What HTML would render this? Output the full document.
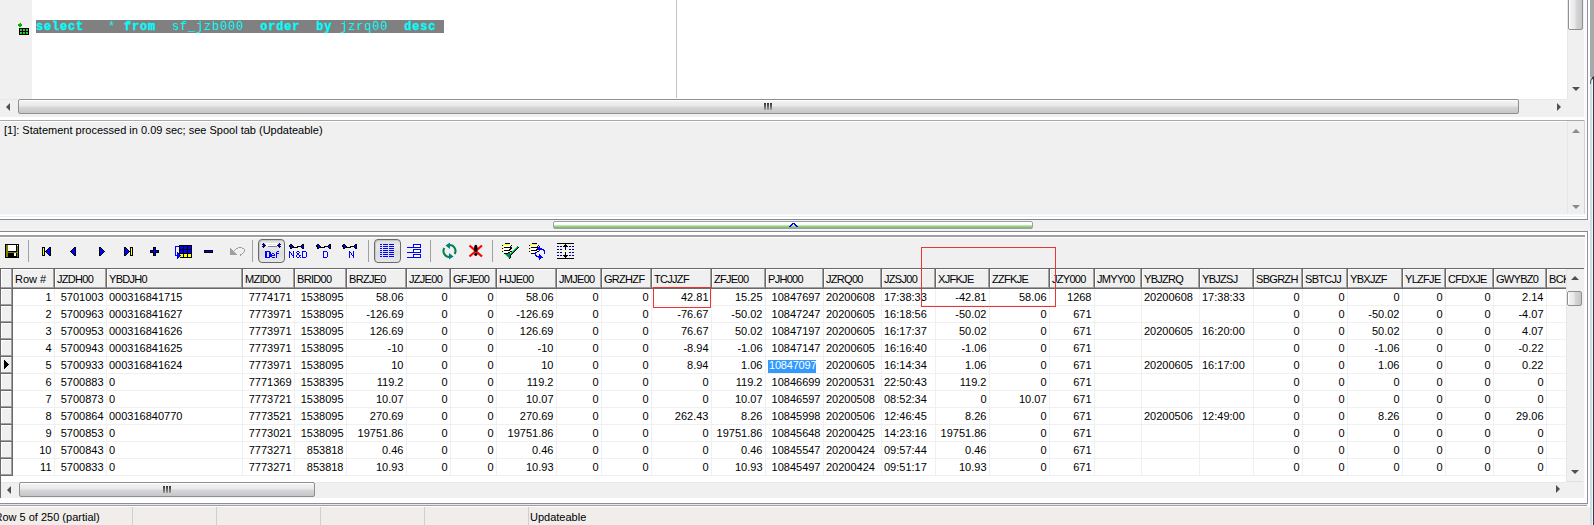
<!DOCTYPE html><html><head><meta charset="utf-8"><style>
*{margin:0;padding:0;box-sizing:border-box}
html,body{width:1594px;height:525px;overflow:hidden;background:#f0f0f0;position:relative}
body div,body svg{position:absolute}
.t{font-family:"Liberation Sans",sans-serif;font-size:11px;line-height:13px;white-space:nowrap;color:#000}
.c{font-family:"Liberation Sans",sans-serif;font-size:11px;line-height:13px;white-space:nowrap;color:#000;overflow:hidden}
.r{text-align:right}
.thumbh{border:1px solid #8e8f8f;border-radius:2px;box-shadow:inset 0 1px 0 #fff;background:linear-gradient(#f4f4f4 0%,#e8e8e8 48%,#d8d8da 52%,#c6c6ca 100%)}
.thumbv{border:1px solid #8e8f8f;border-radius:2px;box-shadow:inset 1px 0 0 #fff;background:linear-gradient(90deg,#f4f4f4 0%,#e8e8e8 48%,#d8d8da 52%,#c6c6ca 100%)}
</style></head><body>

<div style="left:1584px;top:0px;width:10px;height:525px;background:#f0f0f0;"></div>
<div style="left:1584px;top:0px;width:3px;height:525px;background:#fafafa;"></div>
<div style="left:1587px;top:0px;width:1px;height:220px;background:#8c94a4;"></div>
<div style="left:1587px;top:231px;width:1px;height:273px;background:#8c94a4;"></div>
<div style="left:1588px;top:0px;width:2px;height:525px;background:#ffffff;"></div>
<div style="left:1590px;top:0px;width:2px;height:525px;background:#cedcec;"></div>
<div style="left:1592px;top:0px;width:1px;height:525px;background:#eef4fa;"></div>
<div style="left:1593px;top:0px;width:1px;height:525px;background:#3c3c3c;"></div>
<div style="left:1590px;top:0px;width:4px;height:77px;background:#a9a9a9;"></div>
<div style="left:1590px;top:76px;width:8px;height:8px;border-top:2px solid #303030;border-left:1px solid #606060;border-radius:6px 0 0 0"></div>
<div style="left:0px;top:0px;width:1567px;height:99px;background:#ffffff;"></div>
<div style="left:0px;top:0px;width:32px;height:99px;background:#f0f0f0;"></div>
<div style="left:32px;top:0px;width:1px;height:99px;background:#ffffff;"></div>
<div style="left:676px;top:0px;width:1px;height:98px;background:#c4c4c4;"></div>
<svg style="left:18px;top:23px" width="4" height="4" shape-rendering="crispEdges"><rect x="1" y="0" width="1" height="1" fill="#c8e000"/><rect x="2" y="0" width="1" height="1" fill="#00b400"/><rect x="0" y="1" width="4" height="1" fill="#00b400"/><rect x="0" y="2" width="4" height="1" fill="#00b400"/><rect x="1" y="3" width="2" height="1" fill="#00b400"/></svg>
<svg style="left:19px;top:28px" width="10" height="7" shape-rendering="crispEdges"><rect x="0" y="0" width="10" height="7" fill="#000"/><rect x="1" y="1" width="2" height="2" fill="#30c030"/><rect x="1" y="1" width="1" height="1" fill="#00ff00"/><rect x="1" y="4" width="2" height="2" fill="#30c030"/><rect x="1" y="4" width="1" height="1" fill="#00ff00"/><rect x="4" y="1" width="2" height="2" fill="#30c030"/><rect x="4" y="1" width="1" height="1" fill="#00ff00"/><rect x="4" y="4" width="2" height="2" fill="#30c030"/><rect x="4" y="4" width="1" height="1" fill="#00ff00"/><rect x="7" y="1" width="2" height="2" fill="#30c030"/><rect x="7" y="1" width="1" height="1" fill="#00ff00"/><rect x="7" y="4" width="2" height="2" fill="#30c030"/><rect x="7" y="4" width="1" height="1" fill="#00ff00"/></svg>
<div style="left:36px;top:20px;width:408px;height:13px;background:#808080;"></div>
<div style="left:36px;top:21px;font-family:'Liberation Mono',monospace;font-weight:bold;font-size:12px;letter-spacing:0.8px;line-height:13px;color:#00ffff;-webkit-text-stroke:0.3px #00ffff;white-space:pre"><b>select</b>   <span style="font-weight:normal;-webkit-text-stroke:0">*</span> <b>from</b>  <span style="font-weight:normal;-webkit-text-stroke:0">sf_jzb000</span>  <b>order</b>  <b>by</b> <span style="font-weight:normal;-webkit-text-stroke:0">jzrq00</span>  <b>desc</b> </div>
<div style="left:1567px;top:0px;width:17px;height:99px;background:#f0f0f0;"></div>
<div style="left:1567px;top:0px;width:1px;height:99px;background:#e6e6e6;"></div>
<div class="thumbv" style="left:1568px;top:-2px;width:15px;height:32px"></div>
<svg style="left:1572px;top:87px" width="9" height="5"><polygon points="0,0 8,0 4,4" fill="#505050"/></svg>
<div style="left:0px;top:99px;width:1567px;height:16px;background:#f0f0f0;"></div>
<div style="left:0px;top:99px;width:1567px;height:1px;background:#e8e8e8;"></div>
<svg style="left:6px;top:103px" width="5" height="9"><polygon points="4,0 4,8 0,4" fill="#505050"/></svg>
<div class="thumbh" style="left:18px;top:99px;width:1501px;height:15px"></div>
<svg style="left:764px;top:103px" width="8" height="7" shape-rendering="crispEdges"><rect x="0" y="0" width="2" height="7" fill="url(#gg)"/><rect x="3" y="0" width="2" height="7" fill="url(#gg)"/><rect x="6" y="0" width="2" height="7" fill="url(#gg)"/></svg>
<svg style="left:1557px;top:103px" width="5" height="9"><polygon points="0,0 4,4 0,8" fill="#505050"/></svg>
<div style="left:1567px;top:99px;width:17px;height:16px;background:#f0f0f0;"></div>
<div style="left:0px;top:117px;width:1585px;height:3px;background:#ffffff;"></div>
<div style="left:0px;top:120px;width:1585px;height:1px;background:#a8a8a8;"></div>
<div style="left:0px;top:121px;width:1585px;height:1px;background:#ffffff;"></div>
<div style="left:1584px;top:120px;width:1px;height:95px;background:#d4d4d4;"></div>
<div style="left:0px;top:122px;width:1584px;height:93px;background:#f0f0f0;"></div>
<div class="t" style="left:4px;top:124px;">[1]: Statement processed in 0.09 sec; see Spool tab (Updateable)</div>
<div style="left:1567px;top:121px;width:17px;height:94px;background:#f0f0f0;"></div>
<div style="left:1567px;top:121px;width:1px;height:94px;background:#e6e6e6;"></div>
<svg style="left:1572px;top:129px" width="9" height="5"><polygon points="0,4 8,4 4,0" fill="#8a8a8a"/></svg>
<svg style="left:1572px;top:205px" width="9" height="5"><polygon points="0,0 8,0 4,4" fill="#8a8a8a"/></svg>
<div style="left:1567px;top:214px;width:17px;height:1px;background:#e0e0e0;"></div>
<div style="left:0px;top:214px;width:1587px;height:1px;background:#f8f8f8;"></div>
<div style="left:0px;top:215px;width:1587px;height:1px;background:#ffffff;"></div>
<div style="left:0px;top:216px;width:1585px;height:1px;background:#e6ecf4;"></div>
<div style="left:0px;top:217px;width:1587px;height:2px;background:#ffffff;"></div>
<div style="left:0px;top:219px;width:1588px;height:1px;background:#84888f;"></div>
<div style="left:0px;top:220px;width:1590px;height:1px;background:#f0f0f0;"></div>
<div style="left:0px;top:221px;width:1590px;height:10px;background:#f0f0f0;"></div>
<div style="left:553px;top:221px;width:480px;height:8px;border:1px solid #a0a0a0;border-radius:2px;background:linear-gradient(#ffffff 0%,#ffffff 50%,#c8f4b8 50%,#9cd088 75%,#7cae6c 100%)"></div>
<svg style="left:789px;top:223px" width="9" height="4" shape-rendering="crispEdges"><rect x="3" y="0" width="3" height="1" fill="#0000ff"/><rect x="2" y="1" width="2" height="1" fill="#0000ff"/><rect x="5" y="1" width="2" height="1" fill="#0000ff"/><rect x="1" y="2" width="2" height="1" fill="#0000ff"/><rect x="6" y="2" width="2" height="1" fill="#0000ff"/><rect x="0" y="3" width="2" height="1" fill="#0000ff"/><rect x="7" y="3" width="2" height="1" fill="#0000ff"/></svg>
<div style="left:0px;top:229px;width:1584px;height:1px;background:#f4f4f4;"></div>
<div style="left:0px;top:231px;width:1588px;height:1px;background:#84888f;"></div>
<div style="left:0px;top:232px;width:1587px;height:3px;background:#ffffff;"></div>
<div style="left:0px;top:235px;width:1585px;height:2px;background:#a0a0a0;"></div>
<div style="left:1585px;top:232px;width:2px;height:272px;background:#ffffff;"></div>
<div style="left:0px;top:237px;width:1585px;height:31px;background:#f0f0f0;"></div>
<div style="left:0px;top:237px;width:1585px;height:1px;background:#ffffff;"></div>
<svg style="left:5px;top:244px" width="14" height="14" shape-rendering="crispEdges"><rect x="0" y="0" width="14" height="1" fill="#000000"/><rect x="0" y="1" width="1" height="1" fill="#000000"/><rect x="1" y="1" width="2" height="1" fill="#808000"/><rect x="3" y="1" width="8" height="1" fill="#ffffff"/><rect x="11" y="1" width="1" height="1" fill="#000000"/><rect x="12" y="1" width="1" height="1" fill="#ffffff"/><rect x="13" y="1" width="1" height="1" fill="#000000"/><rect x="0" y="2" width="1" height="1" fill="#000000"/><rect x="1" y="2" width="2" height="1" fill="#808000"/><rect x="3" y="2" width="8" height="1" fill="#ffffff"/><rect x="11" y="2" width="1" height="1" fill="#000000"/><rect x="12" y="2" width="1" height="1" fill="#808000"/><rect x="13" y="2" width="1" height="1" fill="#000000"/><rect x="0" y="3" width="1" height="1" fill="#000000"/><rect x="1" y="3" width="2" height="1" fill="#808000"/><rect x="3" y="3" width="8" height="1" fill="#ffffff"/><rect x="11" y="3" width="1" height="1" fill="#000000"/><rect x="12" y="3" width="1" height="1" fill="#808000"/><rect x="13" y="3" width="1" height="1" fill="#000000"/><rect x="0" y="4" width="1" height="1" fill="#000000"/><rect x="1" y="4" width="2" height="1" fill="#808000"/><rect x="3" y="4" width="8" height="1" fill="#ffffff"/><rect x="11" y="4" width="1" height="1" fill="#000000"/><rect x="12" y="4" width="1" height="1" fill="#808000"/><rect x="13" y="4" width="1" height="1" fill="#000000"/><rect x="0" y="5" width="1" height="1" fill="#000000"/><rect x="1" y="5" width="2" height="1" fill="#808000"/><rect x="3" y="5" width="8" height="1" fill="#ffffff"/><rect x="11" y="5" width="1" height="1" fill="#000000"/><rect x="12" y="5" width="1" height="1" fill="#808000"/><rect x="13" y="5" width="1" height="1" fill="#000000"/><rect x="0" y="6" width="1" height="1" fill="#000000"/><rect x="1" y="6" width="2" height="1" fill="#808000"/><rect x="3" y="6" width="8" height="1" fill="#ffffff"/><rect x="11" y="6" width="1" height="1" fill="#000000"/><rect x="12" y="6" width="1" height="1" fill="#808000"/><rect x="13" y="6" width="1" height="1" fill="#000000"/><rect x="0" y="7" width="1" height="1" fill="#000000"/><rect x="1" y="7" width="2" height="1" fill="#808000"/><rect x="3" y="7" width="9" height="1" fill="#000000"/><rect x="12" y="7" width="1" height="1" fill="#808000"/><rect x="13" y="7" width="1" height="1" fill="#000000"/><rect x="0" y="8" width="1" height="1" fill="#000000"/><rect x="1" y="8" width="12" height="1" fill="#808000"/><rect x="13" y="8" width="1" height="1" fill="#000000"/><rect x="0" y="9" width="1" height="1" fill="#000000"/><rect x="1" y="9" width="2" height="1" fill="#808000"/><rect x="3" y="9" width="6" height="1" fill="#000000"/><rect x="9" y="9" width="2" height="1" fill="#ffffff"/><rect x="11" y="9" width="1" height="1" fill="#000000"/><rect x="12" y="9" width="1" height="1" fill="#808000"/><rect x="13" y="9" width="1" height="1" fill="#000000"/><rect x="0" y="10" width="1" height="1" fill="#000000"/><rect x="1" y="10" width="2" height="1" fill="#808000"/><rect x="3" y="10" width="6" height="1" fill="#000000"/><rect x="9" y="10" width="2" height="1" fill="#ffffff"/><rect x="11" y="10" width="1" height="1" fill="#000000"/><rect x="12" y="10" width="1" height="1" fill="#808000"/><rect x="13" y="10" width="1" height="1" fill="#000000"/><rect x="0" y="11" width="1" height="1" fill="#000000"/><rect x="1" y="11" width="2" height="1" fill="#808000"/><rect x="3" y="11" width="6" height="1" fill="#000000"/><rect x="9" y="11" width="2" height="1" fill="#ffffff"/><rect x="11" y="11" width="1" height="1" fill="#000000"/><rect x="12" y="11" width="1" height="1" fill="#808000"/><rect x="13" y="11" width="1" height="1" fill="#000000"/><rect x="0" y="12" width="1" height="1" fill="#000000"/><rect x="1" y="12" width="2" height="1" fill="#808000"/><rect x="3" y="12" width="9" height="1" fill="#000000"/><rect x="12" y="12" width="1" height="1" fill="#808000"/><rect x="13" y="12" width="1" height="1" fill="#000000"/><rect x="0" y="13" width="14" height="1" fill="#000000"/></svg>
<div style="left:28px;top:240px;width:1px;height:22px;background:#a0a0a0;"></div>
<svg style="left:42px;top:247px" width="9" height="9" shape-rendering="crispEdges"><rect x="0" y="0" width="3" height="1" fill="#000000"/><rect x="7" y="0" width="2" height="1" fill="#000000"/><rect x="0" y="1" width="1" height="1" fill="#000000"/><rect x="1" y="1" width="1" height="1" fill="#ffff00"/><rect x="2" y="1" width="1" height="1" fill="#000000"/><rect x="6" y="1" width="1" height="1" fill="#000000"/><rect x="7" y="1" width="1" height="1" fill="#0000ff"/><rect x="8" y="1" width="1" height="1" fill="#000000"/><rect x="0" y="2" width="1" height="1" fill="#000000"/><rect x="1" y="2" width="1" height="1" fill="#ffff00"/><rect x="2" y="2" width="1" height="1" fill="#000000"/><rect x="5" y="2" width="1" height="1" fill="#000000"/><rect x="6" y="2" width="2" height="1" fill="#0000ff"/><rect x="8" y="2" width="1" height="1" fill="#000000"/><rect x="0" y="3" width="1" height="1" fill="#000000"/><rect x="1" y="3" width="1" height="1" fill="#ffff00"/><rect x="2" y="3" width="1" height="1" fill="#000000"/><rect x="4" y="3" width="1" height="1" fill="#000000"/><rect x="5" y="3" width="3" height="1" fill="#0000ff"/><rect x="8" y="3" width="1" height="1" fill="#000000"/><rect x="0" y="4" width="1" height="1" fill="#000000"/><rect x="1" y="4" width="1" height="1" fill="#ffff00"/><rect x="2" y="4" width="2" height="1" fill="#000000"/><rect x="4" y="4" width="4" height="1" fill="#0000ff"/><rect x="8" y="4" width="1" height="1" fill="#000000"/><rect x="0" y="5" width="1" height="1" fill="#000000"/><rect x="1" y="5" width="1" height="1" fill="#ffff00"/><rect x="2" y="5" width="1" height="1" fill="#000000"/><rect x="4" y="5" width="1" height="1" fill="#000000"/><rect x="5" y="5" width="3" height="1" fill="#0000ff"/><rect x="8" y="5" width="1" height="1" fill="#000000"/><rect x="0" y="6" width="1" height="1" fill="#000000"/><rect x="1" y="6" width="1" height="1" fill="#ffff00"/><rect x="2" y="6" width="1" height="1" fill="#000000"/><rect x="5" y="6" width="1" height="1" fill="#000000"/><rect x="6" y="6" width="2" height="1" fill="#0000ff"/><rect x="8" y="6" width="1" height="1" fill="#000000"/><rect x="0" y="7" width="1" height="1" fill="#000000"/><rect x="1" y="7" width="1" height="1" fill="#ffff00"/><rect x="2" y="7" width="1" height="1" fill="#000000"/><rect x="6" y="7" width="1" height="1" fill="#000000"/><rect x="7" y="7" width="1" height="1" fill="#0000ff"/><rect x="8" y="7" width="1" height="1" fill="#000000"/><rect x="0" y="8" width="3" height="1" fill="#000000"/><rect x="7" y="8" width="2" height="1" fill="#000000"/></svg>
<svg style="left:70px;top:247px" width="6" height="9" shape-rendering="crispEdges"><rect x="4" y="0" width="2" height="1" fill="#000000"/><rect x="3" y="1" width="1" height="1" fill="#000000"/><rect x="4" y="1" width="1" height="1" fill="#0000ff"/><rect x="5" y="1" width="1" height="1" fill="#000000"/><rect x="2" y="2" width="1" height="1" fill="#000000"/><rect x="3" y="2" width="2" height="1" fill="#0000ff"/><rect x="5" y="2" width="1" height="1" fill="#000000"/><rect x="1" y="3" width="1" height="1" fill="#000000"/><rect x="2" y="3" width="3" height="1" fill="#0000ff"/><rect x="5" y="3" width="1" height="1" fill="#000000"/><rect x="0" y="4" width="1" height="1" fill="#000000"/><rect x="1" y="4" width="4" height="1" fill="#0000ff"/><rect x="5" y="4" width="1" height="1" fill="#000000"/><rect x="1" y="5" width="1" height="1" fill="#000000"/><rect x="2" y="5" width="3" height="1" fill="#0000ff"/><rect x="5" y="5" width="1" height="1" fill="#000000"/><rect x="2" y="6" width="1" height="1" fill="#000000"/><rect x="3" y="6" width="2" height="1" fill="#0000ff"/><rect x="5" y="6" width="1" height="1" fill="#000000"/><rect x="3" y="7" width="1" height="1" fill="#000000"/><rect x="4" y="7" width="1" height="1" fill="#0000ff"/><rect x="5" y="7" width="1" height="1" fill="#000000"/><rect x="4" y="8" width="2" height="1" fill="#000000"/></svg>
<svg style="left:99px;top:247px" width="6" height="9" shape-rendering="crispEdges"><rect x="0" y="0" width="2" height="1" fill="#000000"/><rect x="0" y="1" width="1" height="1" fill="#000000"/><rect x="1" y="1" width="1" height="1" fill="#0000ff"/><rect x="2" y="1" width="1" height="1" fill="#000000"/><rect x="0" y="2" width="1" height="1" fill="#000000"/><rect x="1" y="2" width="2" height="1" fill="#0000ff"/><rect x="3" y="2" width="1" height="1" fill="#000000"/><rect x="0" y="3" width="1" height="1" fill="#000000"/><rect x="1" y="3" width="3" height="1" fill="#0000ff"/><rect x="4" y="3" width="1" height="1" fill="#000000"/><rect x="0" y="4" width="1" height="1" fill="#000000"/><rect x="1" y="4" width="4" height="1" fill="#0000ff"/><rect x="5" y="4" width="1" height="1" fill="#000000"/><rect x="0" y="5" width="1" height="1" fill="#000000"/><rect x="1" y="5" width="3" height="1" fill="#0000ff"/><rect x="4" y="5" width="1" height="1" fill="#000000"/><rect x="0" y="6" width="1" height="1" fill="#000000"/><rect x="1" y="6" width="2" height="1" fill="#0000ff"/><rect x="3" y="6" width="1" height="1" fill="#000000"/><rect x="0" y="7" width="1" height="1" fill="#000000"/><rect x="1" y="7" width="1" height="1" fill="#0000ff"/><rect x="2" y="7" width="1" height="1" fill="#000000"/><rect x="0" y="8" width="2" height="1" fill="#000000"/></svg>
<svg style="left:124px;top:247px" width="9" height="9" shape-rendering="crispEdges"><rect x="0" y="0" width="2" height="1" fill="#000000"/><rect x="6" y="0" width="3" height="1" fill="#000000"/><rect x="0" y="1" width="1" height="1" fill="#000000"/><rect x="1" y="1" width="1" height="1" fill="#0000ff"/><rect x="2" y="1" width="1" height="1" fill="#000000"/><rect x="6" y="1" width="1" height="1" fill="#000000"/><rect x="7" y="1" width="1" height="1" fill="#ffff00"/><rect x="8" y="1" width="1" height="1" fill="#000000"/><rect x="0" y="2" width="1" height="1" fill="#000000"/><rect x="1" y="2" width="2" height="1" fill="#0000ff"/><rect x="3" y="2" width="1" height="1" fill="#000000"/><rect x="6" y="2" width="1" height="1" fill="#000000"/><rect x="7" y="2" width="1" height="1" fill="#ffff00"/><rect x="8" y="2" width="1" height="1" fill="#000000"/><rect x="0" y="3" width="1" height="1" fill="#000000"/><rect x="1" y="3" width="3" height="1" fill="#0000ff"/><rect x="4" y="3" width="1" height="1" fill="#000000"/><rect x="6" y="3" width="1" height="1" fill="#000000"/><rect x="7" y="3" width="1" height="1" fill="#ffff00"/><rect x="8" y="3" width="1" height="1" fill="#000000"/><rect x="0" y="4" width="1" height="1" fill="#000000"/><rect x="1" y="4" width="4" height="1" fill="#0000ff"/><rect x="5" y="4" width="2" height="1" fill="#000000"/><rect x="7" y="4" width="1" height="1" fill="#ffff00"/><rect x="8" y="4" width="1" height="1" fill="#000000"/><rect x="0" y="5" width="1" height="1" fill="#000000"/><rect x="1" y="5" width="3" height="1" fill="#0000ff"/><rect x="4" y="5" width="1" height="1" fill="#000000"/><rect x="6" y="5" width="1" height="1" fill="#000000"/><rect x="7" y="5" width="1" height="1" fill="#ffff00"/><rect x="8" y="5" width="1" height="1" fill="#000000"/><rect x="0" y="6" width="1" height="1" fill="#000000"/><rect x="1" y="6" width="2" height="1" fill="#0000ff"/><rect x="3" y="6" width="1" height="1" fill="#000000"/><rect x="6" y="6" width="1" height="1" fill="#000000"/><rect x="7" y="6" width="1" height="1" fill="#ffff00"/><rect x="8" y="6" width="1" height="1" fill="#000000"/><rect x="0" y="7" width="1" height="1" fill="#000000"/><rect x="1" y="7" width="1" height="1" fill="#0000ff"/><rect x="2" y="7" width="1" height="1" fill="#000000"/><rect x="6" y="7" width="1" height="1" fill="#000000"/><rect x="7" y="7" width="1" height="1" fill="#ffff00"/><rect x="8" y="7" width="1" height="1" fill="#000000"/><rect x="0" y="8" width="2" height="1" fill="#000000"/><rect x="6" y="8" width="3" height="1" fill="#000000"/></svg>
<svg style="left:150px;top:247px" width="9" height="9" shape-rendering="crispEdges"><rect x="3" y="0" width="3" height="1" fill="#000000"/><rect x="3" y="1" width="1" height="1" fill="#000000"/><rect x="4" y="1" width="1" height="1" fill="#0000ff"/><rect x="5" y="1" width="1" height="1" fill="#000000"/><rect x="3" y="2" width="1" height="1" fill="#000000"/><rect x="4" y="2" width="1" height="1" fill="#0000ff"/><rect x="5" y="2" width="1" height="1" fill="#000000"/><rect x="0" y="3" width="4" height="1" fill="#000000"/><rect x="4" y="3" width="1" height="1" fill="#0000ff"/><rect x="5" y="3" width="4" height="1" fill="#000000"/><rect x="0" y="4" width="1" height="1" fill="#000000"/><rect x="1" y="4" width="7" height="1" fill="#0000ff"/><rect x="8" y="4" width="1" height="1" fill="#000000"/><rect x="0" y="5" width="4" height="1" fill="#000000"/><rect x="4" y="5" width="1" height="1" fill="#0000ff"/><rect x="5" y="5" width="4" height="1" fill="#000000"/><rect x="3" y="6" width="1" height="1" fill="#000000"/><rect x="4" y="6" width="1" height="1" fill="#0000ff"/><rect x="5" y="6" width="1" height="1" fill="#000000"/><rect x="3" y="7" width="1" height="1" fill="#000000"/><rect x="4" y="7" width="1" height="1" fill="#0000ff"/><rect x="5" y="7" width="1" height="1" fill="#000000"/><rect x="3" y="8" width="3" height="1" fill="#000000"/></svg>
<svg style="left:175px;top:245px" width="17" height="14" shape-rendering="crispEdges"><rect x="4" y="0" width="13" height="1" fill="#000000"/><rect x="0" y="1" width="4" height="1" fill="#0000ff"/><rect x="4" y="1" width="1" height="1" fill="#000000"/><rect x="5" y="1" width="3" height="1" fill="#0000ff"/><rect x="8" y="1" width="1" height="1" fill="#000000"/><rect x="9" y="1" width="3" height="1" fill="#0000ff"/><rect x="12" y="1" width="1" height="1" fill="#000000"/><rect x="13" y="1" width="3" height="1" fill="#0000ff"/><rect x="16" y="1" width="1" height="1" fill="#000000"/><rect x="0" y="2" width="1" height="1" fill="#0000ff"/><rect x="4" y="2" width="1" height="1" fill="#000000"/><rect x="5" y="2" width="3" height="1" fill="#0000ff"/><rect x="8" y="2" width="1" height="1" fill="#000000"/><rect x="9" y="2" width="3" height="1" fill="#0000ff"/><rect x="12" y="2" width="1" height="1" fill="#000000"/><rect x="13" y="2" width="3" height="1" fill="#0000ff"/><rect x="16" y="2" width="1" height="1" fill="#000000"/><rect x="0" y="3" width="1" height="1" fill="#0000ff"/><rect x="4" y="3" width="1" height="1" fill="#000000"/><rect x="5" y="3" width="3" height="1" fill="#0000ff"/><rect x="8" y="3" width="1" height="1" fill="#000000"/><rect x="9" y="3" width="3" height="1" fill="#0000ff"/><rect x="12" y="3" width="1" height="1" fill="#000000"/><rect x="13" y="3" width="3" height="1" fill="#0000ff"/><rect x="16" y="3" width="1" height="1" fill="#000000"/><rect x="0" y="4" width="1" height="1" fill="#0000ff"/><rect x="4" y="4" width="13" height="1" fill="#000000"/><rect x="0" y="5" width="1" height="1" fill="#0000ff"/><rect x="4" y="5" width="1" height="1" fill="#000000"/><rect x="5" y="5" width="3" height="1" fill="#0000ff"/><rect x="8" y="5" width="1" height="1" fill="#000000"/><rect x="9" y="5" width="3" height="1" fill="#0000ff"/><rect x="12" y="5" width="1" height="1" fill="#000000"/><rect x="13" y="5" width="3" height="1" fill="#0000ff"/><rect x="16" y="5" width="1" height="1" fill="#000000"/><rect x="0" y="6" width="1" height="1" fill="#0000ff"/><rect x="4" y="6" width="1" height="1" fill="#000000"/><rect x="5" y="6" width="3" height="1" fill="#0000ff"/><rect x="8" y="6" width="1" height="1" fill="#000000"/><rect x="9" y="6" width="3" height="1" fill="#0000ff"/><rect x="12" y="6" width="1" height="1" fill="#000000"/><rect x="13" y="6" width="3" height="1" fill="#0000ff"/><rect x="16" y="6" width="1" height="1" fill="#000000"/><rect x="0" y="7" width="1" height="1" fill="#0000ff"/><rect x="2" y="7" width="1" height="1" fill="#0000ff"/><rect x="4" y="7" width="1" height="1" fill="#000000"/><rect x="5" y="7" width="3" height="1" fill="#0000ff"/><rect x="8" y="7" width="1" height="1" fill="#000000"/><rect x="9" y="7" width="3" height="1" fill="#0000ff"/><rect x="12" y="7" width="1" height="1" fill="#000000"/><rect x="13" y="7" width="3" height="1" fill="#0000ff"/><rect x="16" y="7" width="1" height="1" fill="#000000"/><rect x="0" y="8" width="1" height="1" fill="#0000ff"/><rect x="2" y="8" width="2" height="1" fill="#0000ff"/><rect x="4" y="8" width="13" height="1" fill="#000000"/><rect x="0" y="9" width="1" height="1" fill="#0000ff"/><rect x="2" y="9" width="3" height="1" fill="#0000ff"/><rect x="5" y="9" width="3" height="1" fill="#ffff00"/><rect x="8" y="9" width="1" height="1" fill="#000000"/><rect x="9" y="9" width="3" height="1" fill="#ffff00"/><rect x="12" y="9" width="1" height="1" fill="#000000"/><rect x="13" y="9" width="3" height="1" fill="#ffff00"/><rect x="16" y="9" width="1" height="1" fill="#000000"/><rect x="0" y="10" width="6" height="1" fill="#0000ff"/><rect x="6" y="10" width="2" height="1" fill="#ffff00"/><rect x="8" y="10" width="1" height="1" fill="#000000"/><rect x="9" y="10" width="3" height="1" fill="#ffff00"/><rect x="12" y="10" width="1" height="1" fill="#000000"/><rect x="13" y="10" width="3" height="1" fill="#ffff00"/><rect x="16" y="10" width="1" height="1" fill="#000000"/><rect x="2" y="11" width="3" height="1" fill="#0000ff"/><rect x="5" y="11" width="3" height="1" fill="#ffff00"/><rect x="8" y="11" width="1" height="1" fill="#000000"/><rect x="9" y="11" width="3" height="1" fill="#ffff00"/><rect x="12" y="11" width="1" height="1" fill="#000000"/><rect x="13" y="11" width="3" height="1" fill="#ffff00"/><rect x="16" y="11" width="1" height="1" fill="#000000"/><rect x="2" y="12" width="2" height="1" fill="#0000ff"/><rect x="5" y="12" width="12" height="1" fill="#000000"/><rect x="2" y="13" width="1" height="1" fill="#0000ff"/></svg>
<svg style="left:204px;top:250px" width="9" height="3" shape-rendering="crispEdges"><rect x="0" y="0" width="9" height="1" fill="#000000"/><rect x="0" y="1" width="1" height="1" fill="#000000"/><rect x="1" y="1" width="7" height="1" fill="#0000ff"/><rect x="8" y="1" width="1" height="1" fill="#000000"/><rect x="0" y="2" width="9" height="1" fill="#000000"/></svg>
<svg style="left:230px;top:247px" width="15" height="9" shape-rendering="crispEdges"><rect x="8" y="0" width="4" height="1" fill="#a0a0a0"/><rect x="0" y="1" width="1" height="1" fill="#a0a0a0"/><rect x="6" y="1" width="2" height="1" fill="#a0a0a0"/><rect x="12" y="1" width="2" height="1" fill="#a0a0a0"/><rect x="0" y="2" width="2" height="1" fill="#a0a0a0"/><rect x="5" y="2" width="1" height="1" fill="#a0a0a0"/><rect x="14" y="2" width="1" height="1" fill="#a0a0a0"/><rect x="0" y="3" width="3" height="1" fill="#a0a0a0"/><rect x="4" y="3" width="1" height="1" fill="#a0a0a0"/><rect x="14" y="3" width="1" height="1" fill="#a0a0a0"/><rect x="0" y="4" width="4" height="1" fill="#a0a0a0"/><rect x="14" y="4" width="1" height="1" fill="#a0a0a0"/><rect x="0" y="5" width="5" height="1" fill="#a0a0a0"/><rect x="13" y="5" width="1" height="1" fill="#a0a0a0"/><rect x="0" y="6" width="6" height="1" fill="#a0a0a0"/><rect x="12" y="6" width="1" height="1" fill="#a0a0a0"/><rect x="0" y="7" width="7" height="1" fill="#a0a0a0"/><rect x="10" y="7" width="2" height="1" fill="#a0a0a0"/><rect x="10" y="8" width="1" height="1" fill="#a0a0a0"/></svg>
<div style="left:252px;top:240px;width:1px;height:22px;background:#a0a0a0;"></div>
<div style="left:258px;top:239px;width:27px;height:24px;border:1px solid #6a6a6a;border-radius:4px;box-shadow:inset 1px 1px 0 #c8c8c8;background:linear-gradient(#dcdcdc 0%,#e8e8e8 25%,#e4e4e4 50%,#dcdcdc 52%,#e6e6e6 100%)"></div>
<div style="left:374px;top:239px;width:27px;height:24px;border:1px solid #6a6a6a;border-radius:4px;box-shadow:inset 1px 1px 0 #c8c8c8;background:linear-gradient(#dcdcdc 0%,#e8e8e8 25%,#e4e4e4 50%,#dcdcdc 52%,#e6e6e6 100%)"></div>
<svg style="left:262px;top:243px" width="20" height="5" shape-rendering="crispEdges"><rect x="1" y="0" width="1" height="1" fill="#000080"/><rect x="4" y="0" width="11" height="1" fill="#ffffff"/><rect x="17" y="0" width="1" height="1" fill="#000080"/><rect x="0" y="1" width="3" height="1" fill="#000080"/><rect x="4" y="1" width="1" height="1" fill="#ffffff"/><rect x="14" y="1" width="1" height="1" fill="#ffffff"/><rect x="16" y="1" width="3" height="1" fill="#000080"/><rect x="1" y="2" width="3" height="1" fill="#000080"/><rect x="4" y="2" width="11" height="1" fill="#ffffff"/><rect x="15" y="2" width="3" height="1" fill="#000080"/><rect x="0" y="3" width="3" height="1" fill="#000080"/><rect x="6" y="3" width="9" height="1" fill="#808080"/><rect x="16" y="3" width="3" height="1" fill="#000080"/><rect x="1" y="4" width="1" height="1" fill="#000080"/><rect x="17" y="4" width="1" height="1" fill="#000080"/></svg>
<svg style="left:265px;top:251px" width="14" height="7" shape-rendering="crispEdges"><rect x="0" y="0" width="5" height="1" fill="#0000ff"/><rect x="12" y="0" width="2" height="1" fill="#0000ff"/><rect x="0" y="1" width="2" height="1" fill="#0000ff"/><rect x="4" y="1" width="2" height="1" fill="#0000ff"/><rect x="11" y="1" width="1" height="1" fill="#0000ff"/><rect x="0" y="2" width="2" height="1" fill="#0000ff"/><rect x="4" y="2" width="2" height="1" fill="#0000ff"/><rect x="7" y="2" width="2" height="1" fill="#0000ff"/><rect x="11" y="2" width="3" height="1" fill="#0000ff"/><rect x="0" y="3" width="2" height="1" fill="#0000ff"/><rect x="4" y="3" width="3" height="1" fill="#0000ff"/><rect x="9" y="3" width="1" height="1" fill="#0000ff"/><rect x="11" y="3" width="1" height="1" fill="#0000ff"/><rect x="0" y="4" width="2" height="1" fill="#0000ff"/><rect x="4" y="4" width="6" height="1" fill="#0000ff"/><rect x="11" y="4" width="1" height="1" fill="#0000ff"/><rect x="0" y="5" width="2" height="1" fill="#0000ff"/><rect x="4" y="5" width="3" height="1" fill="#0000ff"/><rect x="11" y="5" width="1" height="1" fill="#0000ff"/><rect x="0" y="6" width="5" height="1" fill="#0000ff"/><rect x="7" y="6" width="3" height="1" fill="#0000ff"/><rect x="11" y="6" width="1" height="1" fill="#0000ff"/></svg>
<svg style="left:289px;top:244px" width="15" height="5" shape-rendering="crispEdges"><rect x="1" y="0" width="2" height="1" fill="#000000"/><rect x="13" y="0" width="2" height="1" fill="#000000"/><rect x="0" y="1" width="1" height="1" fill="#000000"/><rect x="1" y="1" width="2" height="1" fill="#0000ff"/><rect x="3" y="1" width="1" height="1" fill="#000000"/><rect x="12" y="1" width="1" height="1" fill="#000000"/><rect x="13" y="1" width="1" height="1" fill="#0000ff"/><rect x="14" y="1" width="1" height="1" fill="#000000"/><rect x="0" y="2" width="2" height="1" fill="#000000"/><rect x="2" y="2" width="2" height="1" fill="#0000ff"/><rect x="4" y="2" width="1" height="1" fill="#000000"/><rect x="8" y="2" width="4" height="1" fill="#000000"/><rect x="12" y="2" width="2" height="1" fill="#0000ff"/><rect x="14" y="2" width="1" height="1" fill="#000000"/><rect x="1" y="3" width="1" height="1" fill="#000000"/><rect x="2" y="3" width="1" height="1" fill="#0000ff"/><rect x="3" y="3" width="6" height="1" fill="#000000"/><rect x="12" y="3" width="1" height="1" fill="#000000"/><rect x="13" y="3" width="1" height="1" fill="#0000ff"/><rect x="14" y="3" width="1" height="1" fill="#000000"/><rect x="1" y="4" width="2" height="1" fill="#000000"/><rect x="13" y="4" width="2" height="1" fill="#000000"/></svg>
<svg style="left:316px;top:244px" width="15" height="5" shape-rendering="crispEdges"><rect x="1" y="0" width="2" height="1" fill="#000000"/><rect x="13" y="0" width="2" height="1" fill="#000000"/><rect x="0" y="1" width="1" height="1" fill="#000000"/><rect x="1" y="1" width="2" height="1" fill="#0000ff"/><rect x="3" y="1" width="1" height="1" fill="#000000"/><rect x="12" y="1" width="1" height="1" fill="#000000"/><rect x="13" y="1" width="1" height="1" fill="#0000ff"/><rect x="14" y="1" width="1" height="1" fill="#000000"/><rect x="0" y="2" width="2" height="1" fill="#000000"/><rect x="2" y="2" width="2" height="1" fill="#0000ff"/><rect x="4" y="2" width="1" height="1" fill="#000000"/><rect x="8" y="2" width="4" height="1" fill="#000000"/><rect x="12" y="2" width="2" height="1" fill="#0000ff"/><rect x="14" y="2" width="1" height="1" fill="#000000"/><rect x="1" y="3" width="1" height="1" fill="#000000"/><rect x="2" y="3" width="1" height="1" fill="#0000ff"/><rect x="3" y="3" width="6" height="1" fill="#000000"/><rect x="12" y="3" width="1" height="1" fill="#000000"/><rect x="13" y="3" width="1" height="1" fill="#0000ff"/><rect x="14" y="3" width="1" height="1" fill="#000000"/><rect x="1" y="4" width="2" height="1" fill="#000000"/><rect x="13" y="4" width="2" height="1" fill="#000000"/></svg>
<svg style="left:342px;top:244px" width="15" height="5" shape-rendering="crispEdges"><rect x="1" y="0" width="2" height="1" fill="#000000"/><rect x="13" y="0" width="2" height="1" fill="#000000"/><rect x="0" y="1" width="1" height="1" fill="#000000"/><rect x="1" y="1" width="2" height="1" fill="#0000ff"/><rect x="3" y="1" width="1" height="1" fill="#000000"/><rect x="12" y="1" width="1" height="1" fill="#000000"/><rect x="13" y="1" width="1" height="1" fill="#0000ff"/><rect x="14" y="1" width="1" height="1" fill="#000000"/><rect x="0" y="2" width="2" height="1" fill="#000000"/><rect x="2" y="2" width="2" height="1" fill="#0000ff"/><rect x="4" y="2" width="1" height="1" fill="#000000"/><rect x="8" y="2" width="4" height="1" fill="#000000"/><rect x="12" y="2" width="2" height="1" fill="#0000ff"/><rect x="14" y="2" width="1" height="1" fill="#000000"/><rect x="1" y="3" width="1" height="1" fill="#000000"/><rect x="2" y="3" width="1" height="1" fill="#0000ff"/><rect x="3" y="3" width="6" height="1" fill="#000000"/><rect x="12" y="3" width="1" height="1" fill="#000000"/><rect x="13" y="3" width="1" height="1" fill="#0000ff"/><rect x="14" y="3" width="1" height="1" fill="#000000"/><rect x="1" y="4" width="2" height="1" fill="#000000"/><rect x="13" y="4" width="2" height="1" fill="#000000"/></svg>
<svg style="left:289px;top:251px" width="18" height="7" shape-rendering="crispEdges"><rect x="0" y="0" width="1" height="1" fill="#0000ff"/><rect x="4" y="0" width="1" height="1" fill="#0000ff"/><rect x="8" y="0" width="2" height="1" fill="#0000ff"/><rect x="13" y="0" width="4" height="1" fill="#0000ff"/><rect x="0" y="1" width="2" height="1" fill="#0000ff"/><rect x="4" y="1" width="1" height="1" fill="#0000ff"/><rect x="7" y="1" width="1" height="1" fill="#0000ff"/><rect x="10" y="1" width="1" height="1" fill="#0000ff"/><rect x="13" y="1" width="1" height="1" fill="#0000ff"/><rect x="17" y="1" width="1" height="1" fill="#0000ff"/><rect x="0" y="2" width="1" height="1" fill="#0000ff"/><rect x="2" y="2" width="1" height="1" fill="#0000ff"/><rect x="4" y="2" width="1" height="1" fill="#0000ff"/><rect x="8" y="2" width="2" height="1" fill="#0000ff"/><rect x="13" y="2" width="1" height="1" fill="#0000ff"/><rect x="17" y="2" width="1" height="1" fill="#0000ff"/><rect x="0" y="3" width="1" height="1" fill="#0000ff"/><rect x="2" y="3" width="1" height="1" fill="#0000ff"/><rect x="4" y="3" width="1" height="1" fill="#0000ff"/><rect x="8" y="3" width="2" height="1" fill="#0000ff"/><rect x="13" y="3" width="1" height="1" fill="#0000ff"/><rect x="17" y="3" width="1" height="1" fill="#0000ff"/><rect x="0" y="4" width="1" height="1" fill="#0000ff"/><rect x="3" y="4" width="2" height="1" fill="#0000ff"/><rect x="7" y="4" width="1" height="1" fill="#0000ff"/><rect x="10" y="4" width="2" height="1" fill="#0000ff"/><rect x="13" y="4" width="1" height="1" fill="#0000ff"/><rect x="17" y="4" width="1" height="1" fill="#0000ff"/><rect x="0" y="5" width="1" height="1" fill="#0000ff"/><rect x="4" y="5" width="1" height="1" fill="#0000ff"/><rect x="7" y="5" width="1" height="1" fill="#0000ff"/><rect x="10" y="5" width="1" height="1" fill="#0000ff"/><rect x="13" y="5" width="1" height="1" fill="#0000ff"/><rect x="17" y="5" width="1" height="1" fill="#0000ff"/><rect x="0" y="6" width="1" height="1" fill="#0000ff"/><rect x="4" y="6" width="1" height="1" fill="#0000ff"/><rect x="8" y="6" width="2" height="1" fill="#0000ff"/><rect x="11" y="6" width="1" height="1" fill="#0000ff"/><rect x="13" y="6" width="4" height="1" fill="#0000ff"/></svg>
<svg style="left:323px;top:251px" width="5" height="7" shape-rendering="crispEdges"><rect x="0" y="0" width="4" height="1" fill="#0000ff"/><rect x="0" y="1" width="1" height="1" fill="#0000ff"/><rect x="4" y="1" width="1" height="1" fill="#0000ff"/><rect x="0" y="2" width="1" height="1" fill="#0000ff"/><rect x="4" y="2" width="1" height="1" fill="#0000ff"/><rect x="0" y="3" width="1" height="1" fill="#0000ff"/><rect x="4" y="3" width="1" height="1" fill="#0000ff"/><rect x="0" y="4" width="1" height="1" fill="#0000ff"/><rect x="4" y="4" width="1" height="1" fill="#0000ff"/><rect x="0" y="5" width="1" height="1" fill="#0000ff"/><rect x="4" y="5" width="1" height="1" fill="#0000ff"/><rect x="0" y="6" width="4" height="1" fill="#0000ff"/></svg>
<svg style="left:349px;top:251px" width="5" height="7" shape-rendering="crispEdges"><rect x="0" y="0" width="1" height="1" fill="#0000ff"/><rect x="4" y="0" width="1" height="1" fill="#0000ff"/><rect x="0" y="1" width="2" height="1" fill="#0000ff"/><rect x="4" y="1" width="1" height="1" fill="#0000ff"/><rect x="0" y="2" width="1" height="1" fill="#0000ff"/><rect x="2" y="2" width="1" height="1" fill="#0000ff"/><rect x="4" y="2" width="1" height="1" fill="#0000ff"/><rect x="0" y="3" width="1" height="1" fill="#0000ff"/><rect x="2" y="3" width="1" height="1" fill="#0000ff"/><rect x="4" y="3" width="1" height="1" fill="#0000ff"/><rect x="0" y="4" width="1" height="1" fill="#0000ff"/><rect x="3" y="4" width="2" height="1" fill="#0000ff"/><rect x="0" y="5" width="1" height="1" fill="#0000ff"/><rect x="4" y="5" width="1" height="1" fill="#0000ff"/><rect x="0" y="6" width="1" height="1" fill="#0000ff"/><rect x="4" y="6" width="1" height="1" fill="#0000ff"/></svg>
<div style="left:368px;top:240px;width:1px;height:22px;background:#a0a0a0;"></div>
<svg style="left:380px;top:244px" width="15" height="14" shape-rendering="crispEdges"><rect x="0" y="0" width="2" height="1" fill="#0000ff"/><rect x="3" y="0" width="5" height="1" fill="#0000ff"/><rect x="9" y="0" width="5" height="1" fill="#0000ff"/><rect x="0" y="2" width="2" height="1" fill="#0000ff"/><rect x="3" y="2" width="5" height="1" fill="#0000ff"/><rect x="9" y="2" width="5" height="1" fill="#0000ff"/><rect x="0" y="4" width="2" height="1" fill="#0000ff"/><rect x="3" y="4" width="5" height="1" fill="#0000ff"/><rect x="9" y="4" width="5" height="1" fill="#0000ff"/><rect x="0" y="6" width="2" height="1" fill="#0000ff"/><rect x="3" y="6" width="5" height="1" fill="#0000ff"/><rect x="9" y="6" width="5" height="1" fill="#0000ff"/><rect x="0" y="8" width="2" height="1" fill="#0000ff"/><rect x="3" y="8" width="5" height="1" fill="#0000ff"/><rect x="9" y="8" width="5" height="1" fill="#0000ff"/><rect x="0" y="10" width="2" height="1" fill="#0000ff"/><rect x="3" y="10" width="5" height="1" fill="#0000ff"/><rect x="9" y="10" width="5" height="1" fill="#0000ff"/><rect x="0" y="12" width="2" height="1" fill="#0000ff"/><rect x="3" y="12" width="5" height="1" fill="#0000ff"/><rect x="9" y="12" width="5" height="1" fill="#0000ff"/></svg>
<svg style="left:407px;top:244px" width="14" height="14" shape-rendering="crispEdges"><rect x="6" y="0" width="8" height="1" fill="#0000ff"/><rect x="6" y="1" width="1" height="1" fill="#0000ff"/><rect x="7" y="1" width="6" height="1" fill="#fffff0"/><rect x="13" y="1" width="1" height="1" fill="#0000ff"/><rect x="6" y="2" width="1" height="1" fill="#0000ff"/><rect x="7" y="2" width="6" height="1" fill="#fffff0"/><rect x="13" y="2" width="1" height="1" fill="#0000ff"/><rect x="0" y="3" width="14" height="1" fill="#0000ff"/><rect x="6" y="5" width="8" height="1" fill="#0000ff"/><rect x="6" y="6" width="1" height="1" fill="#0000ff"/><rect x="7" y="6" width="6" height="1" fill="#fffff0"/><rect x="13" y="6" width="1" height="1" fill="#0000ff"/><rect x="6" y="7" width="1" height="1" fill="#0000ff"/><rect x="7" y="7" width="6" height="1" fill="#fffff0"/><rect x="13" y="7" width="1" height="1" fill="#0000ff"/><rect x="0" y="8" width="14" height="1" fill="#0000ff"/><rect x="6" y="10" width="8" height="1" fill="#0000ff"/><rect x="6" y="11" width="1" height="1" fill="#0000ff"/><rect x="7" y="11" width="6" height="1" fill="#fffff0"/><rect x="13" y="11" width="1" height="1" fill="#0000ff"/><rect x="6" y="12" width="1" height="1" fill="#0000ff"/><rect x="7" y="12" width="6" height="1" fill="#fffff0"/><rect x="13" y="12" width="1" height="1" fill="#0000ff"/><rect x="0" y="13" width="14" height="1" fill="#0000ff"/></svg>
<div style="left:430px;top:240px;width:1px;height:22px;background:#a0a0a0;"></div>
<svg style="left:441px;top:242px" width="18" height="18"><path d="M 8.5 3 A 6 6 0 0 1 13.7 12" stroke="#00804a" stroke-width="2" fill="none"/><path d="M 8.5 15 A 6 6 0 0 1 3.3 6" stroke="#00804a" stroke-width="2" fill="none"/><polygon points="4.5,3.5 9,0.5 9,7" fill="#008080"/><polygon points="12.5,14.5 8,11 8,17.5" fill="#008080"/></svg>
<svg style="left:468px;top:244px" width="16" height="14"><line x1="1.5" y1="1.5" x2="14" y2="12.5" stroke="#ff0000" stroke-width="2.2"/><line x1="14" y1="1.5" x2="1.5" y2="12.5" stroke="#ff0000" stroke-width="2.2"/><ellipse cx="7.8" cy="4.3" rx="1.7" ry="3.6" fill="#000"/><circle cx="7.8" cy="10.3" r="1.6" fill="#000"/></svg>
<div style="left:492px;top:240px;width:1px;height:22px;background:#a0a0a0;"></div>
<svg style="left:502px;top:243px" width="10" height="11" shape-rendering="crispEdges"><rect x="3" y="0" width="5" height="1" fill="#000000"/><rect x="1" y="1" width="7" height="1" fill="#ffff00"/><rect x="8" y="1" width="1" height="1" fill="#ffffff"/><rect x="0" y="2" width="1" height="1" fill="#000000"/><rect x="1" y="2" width="1" height="1" fill="#ffff00"/><rect x="2" y="2" width="7" height="1" fill="#ffffff"/><rect x="9" y="2" width="1" height="1" fill="#000000"/><rect x="1" y="3" width="7" height="1" fill="#ffffff"/><rect x="8" y="3" width="1" height="1" fill="#000000"/><rect x="2" y="4" width="8" height="1" fill="#000000"/><rect x="0" y="5" width="1" height="1" fill="#000000"/><rect x="1" y="5" width="1" height="1" fill="#ffff00"/><rect x="2" y="5" width="6" height="1" fill="#ffffff"/><rect x="8" y="5" width="2" height="1" fill="#000000"/><rect x="1" y="6" width="6" height="1" fill="#ffffff"/><rect x="7" y="6" width="2" height="1" fill="#000000"/><rect x="2" y="7" width="6" height="1" fill="#000000"/><rect x="0" y="8" width="1" height="1" fill="#000000"/><rect x="1" y="8" width="1" height="1" fill="#ffff00"/><rect x="2" y="8" width="6" height="1" fill="#ffffff"/><rect x="8" y="8" width="2" height="1" fill="#000000"/><rect x="2" y="9" width="4" height="1" fill="#ffffff"/><rect x="6" y="9" width="2" height="1" fill="#000000"/><rect x="2" y="10" width="5" height="1" fill="#000000"/></svg>
<svg style="left:505px;top:246px" width="14" height="13" shape-rendering="crispEdges"><rect x="12" y="0" width="1" height="1" fill="#008080"/><rect x="11" y="1" width="1" height="1" fill="#00ff00"/><rect x="12" y="1" width="1" height="1" fill="#008080"/><rect x="13" y="1" width="1" height="1" fill="#000000"/><rect x="10" y="2" width="1" height="1" fill="#00ff00"/><rect x="11" y="2" width="1" height="1" fill="#008080"/><rect x="12" y="2" width="1" height="1" fill="#000000"/><rect x="9" y="3" width="1" height="1" fill="#00ff00"/><rect x="10" y="3" width="1" height="1" fill="#008080"/><rect x="11" y="3" width="1" height="1" fill="#000000"/><rect x="8" y="4" width="1" height="1" fill="#00ff00"/><rect x="9" y="4" width="1" height="1" fill="#008080"/><rect x="10" y="4" width="1" height="1" fill="#000000"/><rect x="7" y="5" width="1" height="1" fill="#00ff00"/><rect x="8" y="5" width="1" height="1" fill="#008080"/><rect x="9" y="5" width="1" height="1" fill="#000000"/><rect x="6" y="6" width="1" height="1" fill="#00ff00"/><rect x="7" y="6" width="1" height="1" fill="#008080"/><rect x="8" y="6" width="1" height="1" fill="#000000"/><rect x="3" y="7" width="2" height="1" fill="#008080"/><rect x="5" y="7" width="1" height="1" fill="#00ff00"/><rect x="6" y="7" width="1" height="1" fill="#008080"/><rect x="7" y="7" width="1" height="1" fill="#000000"/><rect x="0" y="8" width="1" height="1" fill="#00ff00"/><rect x="1" y="8" width="5" height="1" fill="#008080"/><rect x="6" y="8" width="1" height="1" fill="#000000"/><rect x="1" y="9" width="1" height="1" fill="#00ff00"/><rect x="2" y="9" width="3" height="1" fill="#008080"/><rect x="5" y="9" width="1" height="1" fill="#000000"/><rect x="2" y="10" width="1" height="1" fill="#00ff00"/><rect x="3" y="10" width="2" height="1" fill="#008080"/><rect x="5" y="10" width="1" height="1" fill="#000000"/><rect x="3" y="11" width="1" height="1" fill="#00ff00"/><rect x="4" y="11" width="1" height="1" fill="#008080"/><rect x="5" y="11" width="1" height="1" fill="#000000"/><rect x="4" y="12" width="1" height="1" fill="#000000"/></svg>
<svg style="left:529px;top:243px" width="10" height="11" shape-rendering="crispEdges"><rect x="3" y="0" width="5" height="1" fill="#000000"/><rect x="1" y="1" width="7" height="1" fill="#ffff00"/><rect x="8" y="1" width="1" height="1" fill="#ffffff"/><rect x="0" y="2" width="1" height="1" fill="#000000"/><rect x="1" y="2" width="1" height="1" fill="#ffff00"/><rect x="2" y="2" width="7" height="1" fill="#ffffff"/><rect x="9" y="2" width="1" height="1" fill="#000000"/><rect x="1" y="3" width="7" height="1" fill="#ffffff"/><rect x="8" y="3" width="1" height="1" fill="#000000"/><rect x="2" y="4" width="8" height="1" fill="#000000"/><rect x="0" y="5" width="1" height="1" fill="#000000"/><rect x="1" y="5" width="1" height="1" fill="#ffff00"/><rect x="2" y="5" width="6" height="1" fill="#ffffff"/><rect x="8" y="5" width="2" height="1" fill="#000000"/><rect x="1" y="6" width="6" height="1" fill="#ffffff"/><rect x="7" y="6" width="2" height="1" fill="#000000"/><rect x="2" y="7" width="6" height="1" fill="#000000"/><rect x="0" y="8" width="1" height="1" fill="#000000"/><rect x="1" y="8" width="1" height="1" fill="#ffff00"/><rect x="2" y="8" width="6" height="1" fill="#ffffff"/><rect x="8" y="8" width="2" height="1" fill="#000000"/><rect x="2" y="9" width="4" height="1" fill="#ffffff"/><rect x="6" y="9" width="2" height="1" fill="#000000"/><rect x="2" y="10" width="5" height="1" fill="#000000"/></svg>
<svg style="left:535px;top:246px" width="11" height="14" shape-rendering="crispEdges"><rect x="4" y="0" width="1" height="1" fill="#0000ff"/><rect x="3" y="1" width="2" height="1" fill="#0000ff"/><rect x="2" y="2" width="5" height="1" fill="#0000ff"/><rect x="3" y="3" width="6" height="1" fill="#0000ff"/><rect x="4" y="4" width="1" height="1" fill="#0000ff"/><rect x="8" y="4" width="2" height="1" fill="#0000ff"/><rect x="9" y="5" width="1" height="1" fill="#0000ff"/><rect x="0" y="6" width="2" height="1" fill="#0000ff"/><rect x="9" y="6" width="1" height="1" fill="#0000ff"/><rect x="0" y="7" width="1" height="1" fill="#0000ff"/><rect x="9" y="7" width="1" height="1" fill="#0000ff"/><rect x="0" y="8" width="1" height="1" fill="#0000ff"/><rect x="4" y="8" width="1" height="1" fill="#0000ff"/><rect x="0" y="9" width="2" height="1" fill="#0000ff"/><rect x="4" y="9" width="2" height="1" fill="#0000ff"/><rect x="1" y="10" width="6" height="1" fill="#0000ff"/><rect x="3" y="11" width="5" height="1" fill="#0000ff"/><rect x="4" y="12" width="2" height="1" fill="#0000ff"/><rect x="4" y="13" width="1" height="1" fill="#0000ff"/></svg>
<svg style="left:557px;top:243px" width="17" height="16" shape-rendering="crispEdges"><rect x="0" y="0" width="17" height="1" fill="#000000"/><rect x="8" y="1" width="1" height="1" fill="#000000"/><rect x="7" y="2" width="3" height="1" fill="#000000"/><rect x="0" y="3" width="2" height="1" fill="#000080"/><rect x="3" y="3" width="2" height="1" fill="#000080"/><rect x="6" y="3" width="5" height="1" fill="#000000"/><rect x="12" y="3" width="2" height="1" fill="#000080"/><rect x="15" y="3" width="2" height="1" fill="#000080"/><rect x="8" y="4" width="1" height="1" fill="#000000"/><rect x="8" y="5" width="1" height="1" fill="#000000"/><rect x="0" y="6" width="2" height="1" fill="#000080"/><rect x="3" y="6" width="2" height="1" fill="#000080"/><rect x="8" y="6" width="1" height="1" fill="#000000"/><rect x="12" y="6" width="2" height="1" fill="#000080"/><rect x="15" y="6" width="2" height="1" fill="#000080"/><rect x="0" y="9" width="2" height="1" fill="#000080"/><rect x="3" y="9" width="2" height="1" fill="#000080"/><rect x="8" y="9" width="1" height="1" fill="#000000"/><rect x="12" y="9" width="2" height="1" fill="#000080"/><rect x="15" y="9" width="2" height="1" fill="#000080"/><rect x="8" y="10" width="1" height="1" fill="#000000"/><rect x="8" y="11" width="1" height="1" fill="#000000"/><rect x="0" y="12" width="2" height="1" fill="#000080"/><rect x="3" y="12" width="2" height="1" fill="#000080"/><rect x="6" y="12" width="5" height="1" fill="#000000"/><rect x="12" y="12" width="2" height="1" fill="#000080"/><rect x="15" y="12" width="2" height="1" fill="#000080"/><rect x="7" y="13" width="3" height="1" fill="#000000"/><rect x="8" y="14" width="1" height="1" fill="#000000"/><rect x="0" y="15" width="17" height="1" fill="#000000"/></svg>
<div style="left:0px;top:267px;width:1584px;height:1px;background:#f0f0f0;"></div>
<div style="left:0;top:268px;width:1566px;height:214px;overflow:hidden;background:#fff">
<div style="left:0px;top:0px;width:1566px;height:21px;background:#f0f0f0;"></div>
<div style="left:0px;top:0px;width:1586px;height:1px;background:#696969;"></div>
<div style="left:0px;top:0px;width:1px;height:214px;background:#696969;"></div>
<div style="left:1px;top:1px;width:12px;height:1px;background:#ffffff;"></div>
<div style="left:1px;top:1px;width:1px;height:19px;background:#ffffff;"></div>
<div style="left:11px;top:1px;width:1px;height:19px;background:#a0a0a0;"></div>
<div style="left:1px;top:19px;width:12px;height:1px;background:#a0a0a0;"></div>
<div style="left:12px;top:1px;width:1px;height:20px;background:#696969;"></div>
<div style="left:1px;top:20px;width:12px;height:1px;background:#696969;"></div>
<div style="left:13px;top:1px;width:42px;height:1px;background:#ffffff;"></div>
<div style="left:13px;top:1px;width:1px;height:19px;background:#ffffff;"></div>
<div style="left:53px;top:1px;width:1px;height:19px;background:#a0a0a0;"></div>
<div style="left:13px;top:19px;width:42px;height:1px;background:#a0a0a0;"></div>
<div style="left:54px;top:1px;width:1px;height:20px;background:#696969;"></div>
<div style="left:13px;top:20px;width:42px;height:1px;background:#696969;"></div>
<div style="left:55px;top:1px;width:52px;height:1px;background:#ffffff;"></div>
<div style="left:55px;top:1px;width:1px;height:19px;background:#ffffff;"></div>
<div style="left:105px;top:1px;width:1px;height:19px;background:#a0a0a0;"></div>
<div style="left:55px;top:19px;width:52px;height:1px;background:#a0a0a0;"></div>
<div style="left:106px;top:1px;width:1px;height:20px;background:#696969;"></div>
<div style="left:55px;top:20px;width:52px;height:1px;background:#696969;"></div>
<div style="left:107px;top:1px;width:136px;height:1px;background:#ffffff;"></div>
<div style="left:107px;top:1px;width:1px;height:19px;background:#ffffff;"></div>
<div style="left:241px;top:1px;width:1px;height:19px;background:#a0a0a0;"></div>
<div style="left:107px;top:19px;width:136px;height:1px;background:#a0a0a0;"></div>
<div style="left:242px;top:1px;width:1px;height:20px;background:#696969;"></div>
<div style="left:107px;top:20px;width:136px;height:1px;background:#696969;"></div>
<div style="left:243px;top:1px;width:52px;height:1px;background:#ffffff;"></div>
<div style="left:243px;top:1px;width:1px;height:19px;background:#ffffff;"></div>
<div style="left:293px;top:1px;width:1px;height:19px;background:#a0a0a0;"></div>
<div style="left:243px;top:19px;width:52px;height:1px;background:#a0a0a0;"></div>
<div style="left:294px;top:1px;width:1px;height:20px;background:#696969;"></div>
<div style="left:243px;top:20px;width:52px;height:1px;background:#696969;"></div>
<div style="left:295px;top:1px;width:52px;height:1px;background:#ffffff;"></div>
<div style="left:295px;top:1px;width:1px;height:19px;background:#ffffff;"></div>
<div style="left:345px;top:1px;width:1px;height:19px;background:#a0a0a0;"></div>
<div style="left:295px;top:19px;width:52px;height:1px;background:#a0a0a0;"></div>
<div style="left:346px;top:1px;width:1px;height:20px;background:#696969;"></div>
<div style="left:295px;top:20px;width:52px;height:1px;background:#696969;"></div>
<div style="left:347px;top:1px;width:60px;height:1px;background:#ffffff;"></div>
<div style="left:347px;top:1px;width:1px;height:19px;background:#ffffff;"></div>
<div style="left:405px;top:1px;width:1px;height:19px;background:#a0a0a0;"></div>
<div style="left:347px;top:19px;width:60px;height:1px;background:#a0a0a0;"></div>
<div style="left:406px;top:1px;width:1px;height:20px;background:#696969;"></div>
<div style="left:347px;top:20px;width:60px;height:1px;background:#696969;"></div>
<div style="left:407px;top:1px;width:44px;height:1px;background:#ffffff;"></div>
<div style="left:407px;top:1px;width:1px;height:19px;background:#ffffff;"></div>
<div style="left:449px;top:1px;width:1px;height:19px;background:#a0a0a0;"></div>
<div style="left:407px;top:19px;width:44px;height:1px;background:#a0a0a0;"></div>
<div style="left:450px;top:1px;width:1px;height:20px;background:#696969;"></div>
<div style="left:407px;top:20px;width:44px;height:1px;background:#696969;"></div>
<div style="left:451px;top:1px;width:46px;height:1px;background:#ffffff;"></div>
<div style="left:451px;top:1px;width:1px;height:19px;background:#ffffff;"></div>
<div style="left:495px;top:1px;width:1px;height:19px;background:#a0a0a0;"></div>
<div style="left:451px;top:19px;width:46px;height:1px;background:#a0a0a0;"></div>
<div style="left:496px;top:1px;width:1px;height:20px;background:#696969;"></div>
<div style="left:451px;top:20px;width:46px;height:1px;background:#696969;"></div>
<div style="left:497px;top:1px;width:60px;height:1px;background:#ffffff;"></div>
<div style="left:497px;top:1px;width:1px;height:19px;background:#ffffff;"></div>
<div style="left:555px;top:1px;width:1px;height:19px;background:#a0a0a0;"></div>
<div style="left:497px;top:19px;width:60px;height:1px;background:#a0a0a0;"></div>
<div style="left:556px;top:1px;width:1px;height:20px;background:#696969;"></div>
<div style="left:497px;top:20px;width:60px;height:1px;background:#696969;"></div>
<div style="left:557px;top:1px;width:45px;height:1px;background:#ffffff;"></div>
<div style="left:557px;top:1px;width:1px;height:19px;background:#ffffff;"></div>
<div style="left:600px;top:1px;width:1px;height:19px;background:#a0a0a0;"></div>
<div style="left:557px;top:19px;width:45px;height:1px;background:#a0a0a0;"></div>
<div style="left:601px;top:1px;width:1px;height:20px;background:#696969;"></div>
<div style="left:557px;top:20px;width:45px;height:1px;background:#696969;"></div>
<div style="left:602px;top:1px;width:50px;height:1px;background:#ffffff;"></div>
<div style="left:602px;top:1px;width:1px;height:19px;background:#ffffff;"></div>
<div style="left:650px;top:1px;width:1px;height:19px;background:#a0a0a0;"></div>
<div style="left:602px;top:19px;width:50px;height:1px;background:#a0a0a0;"></div>
<div style="left:651px;top:1px;width:1px;height:20px;background:#696969;"></div>
<div style="left:602px;top:20px;width:50px;height:1px;background:#696969;"></div>
<div style="left:652px;top:1px;width:60px;height:1px;background:#ffffff;"></div>
<div style="left:652px;top:1px;width:1px;height:19px;background:#ffffff;"></div>
<div style="left:710px;top:1px;width:1px;height:19px;background:#a0a0a0;"></div>
<div style="left:652px;top:19px;width:60px;height:1px;background:#a0a0a0;"></div>
<div style="left:711px;top:1px;width:1px;height:20px;background:#696969;"></div>
<div style="left:652px;top:20px;width:60px;height:1px;background:#696969;"></div>
<div style="left:712px;top:1px;width:54px;height:1px;background:#ffffff;"></div>
<div style="left:712px;top:1px;width:1px;height:19px;background:#ffffff;"></div>
<div style="left:764px;top:1px;width:1px;height:19px;background:#a0a0a0;"></div>
<div style="left:712px;top:19px;width:54px;height:1px;background:#a0a0a0;"></div>
<div style="left:765px;top:1px;width:1px;height:20px;background:#696969;"></div>
<div style="left:712px;top:20px;width:54px;height:1px;background:#696969;"></div>
<div style="left:766px;top:1px;width:58px;height:1px;background:#ffffff;"></div>
<div style="left:766px;top:1px;width:1px;height:19px;background:#ffffff;"></div>
<div style="left:822px;top:1px;width:1px;height:19px;background:#a0a0a0;"></div>
<div style="left:766px;top:19px;width:58px;height:1px;background:#a0a0a0;"></div>
<div style="left:823px;top:1px;width:1px;height:20px;background:#696969;"></div>
<div style="left:766px;top:20px;width:58px;height:1px;background:#696969;"></div>
<div style="left:824px;top:1px;width:58px;height:1px;background:#ffffff;"></div>
<div style="left:824px;top:1px;width:1px;height:19px;background:#ffffff;"></div>
<div style="left:880px;top:1px;width:1px;height:19px;background:#a0a0a0;"></div>
<div style="left:824px;top:19px;width:58px;height:1px;background:#a0a0a0;"></div>
<div style="left:881px;top:1px;width:1px;height:20px;background:#696969;"></div>
<div style="left:824px;top:20px;width:58px;height:1px;background:#696969;"></div>
<div style="left:882px;top:1px;width:54px;height:1px;background:#ffffff;"></div>
<div style="left:882px;top:1px;width:1px;height:19px;background:#ffffff;"></div>
<div style="left:934px;top:1px;width:1px;height:19px;background:#a0a0a0;"></div>
<div style="left:882px;top:19px;width:54px;height:1px;background:#a0a0a0;"></div>
<div style="left:935px;top:1px;width:1px;height:20px;background:#696969;"></div>
<div style="left:882px;top:20px;width:54px;height:1px;background:#696969;"></div>
<div style="left:936px;top:1px;width:54px;height:1px;background:#ffffff;"></div>
<div style="left:936px;top:1px;width:1px;height:19px;background:#ffffff;"></div>
<div style="left:988px;top:1px;width:1px;height:19px;background:#a0a0a0;"></div>
<div style="left:936px;top:19px;width:54px;height:1px;background:#a0a0a0;"></div>
<div style="left:989px;top:1px;width:1px;height:20px;background:#696969;"></div>
<div style="left:936px;top:20px;width:54px;height:1px;background:#696969;"></div>
<div style="left:990px;top:1px;width:60px;height:1px;background:#ffffff;"></div>
<div style="left:990px;top:1px;width:1px;height:19px;background:#ffffff;"></div>
<div style="left:1048px;top:1px;width:1px;height:19px;background:#a0a0a0;"></div>
<div style="left:990px;top:19px;width:60px;height:1px;background:#a0a0a0;"></div>
<div style="left:1049px;top:1px;width:1px;height:20px;background:#696969;"></div>
<div style="left:990px;top:20px;width:60px;height:1px;background:#696969;"></div>
<div style="left:1050px;top:1px;width:45px;height:1px;background:#ffffff;"></div>
<div style="left:1050px;top:1px;width:1px;height:19px;background:#ffffff;"></div>
<div style="left:1093px;top:1px;width:1px;height:19px;background:#a0a0a0;"></div>
<div style="left:1050px;top:19px;width:45px;height:1px;background:#a0a0a0;"></div>
<div style="left:1094px;top:1px;width:1px;height:20px;background:#696969;"></div>
<div style="left:1050px;top:20px;width:45px;height:1px;background:#696969;"></div>
<div style="left:1095px;top:1px;width:47px;height:1px;background:#ffffff;"></div>
<div style="left:1095px;top:1px;width:1px;height:19px;background:#ffffff;"></div>
<div style="left:1140px;top:1px;width:1px;height:19px;background:#a0a0a0;"></div>
<div style="left:1095px;top:19px;width:47px;height:1px;background:#a0a0a0;"></div>
<div style="left:1141px;top:1px;width:1px;height:20px;background:#696969;"></div>
<div style="left:1095px;top:20px;width:47px;height:1px;background:#696969;"></div>
<div style="left:1142px;top:1px;width:58px;height:1px;background:#ffffff;"></div>
<div style="left:1142px;top:1px;width:1px;height:19px;background:#ffffff;"></div>
<div style="left:1198px;top:1px;width:1px;height:19px;background:#a0a0a0;"></div>
<div style="left:1142px;top:19px;width:58px;height:1px;background:#a0a0a0;"></div>
<div style="left:1199px;top:1px;width:1px;height:20px;background:#696969;"></div>
<div style="left:1142px;top:20px;width:58px;height:1px;background:#696969;"></div>
<div style="left:1200px;top:1px;width:54px;height:1px;background:#ffffff;"></div>
<div style="left:1200px;top:1px;width:1px;height:19px;background:#ffffff;"></div>
<div style="left:1252px;top:1px;width:1px;height:19px;background:#a0a0a0;"></div>
<div style="left:1200px;top:19px;width:54px;height:1px;background:#a0a0a0;"></div>
<div style="left:1253px;top:1px;width:1px;height:20px;background:#696969;"></div>
<div style="left:1200px;top:20px;width:54px;height:1px;background:#696969;"></div>
<div style="left:1254px;top:1px;width:49px;height:1px;background:#ffffff;"></div>
<div style="left:1254px;top:1px;width:1px;height:19px;background:#ffffff;"></div>
<div style="left:1301px;top:1px;width:1px;height:19px;background:#a0a0a0;"></div>
<div style="left:1254px;top:19px;width:49px;height:1px;background:#a0a0a0;"></div>
<div style="left:1302px;top:1px;width:1px;height:20px;background:#696969;"></div>
<div style="left:1254px;top:20px;width:49px;height:1px;background:#696969;"></div>
<div style="left:1303px;top:1px;width:45px;height:1px;background:#ffffff;"></div>
<div style="left:1303px;top:1px;width:1px;height:19px;background:#ffffff;"></div>
<div style="left:1346px;top:1px;width:1px;height:19px;background:#a0a0a0;"></div>
<div style="left:1303px;top:19px;width:45px;height:1px;background:#a0a0a0;"></div>
<div style="left:1347px;top:1px;width:1px;height:20px;background:#696969;"></div>
<div style="left:1303px;top:20px;width:45px;height:1px;background:#696969;"></div>
<div style="left:1348px;top:1px;width:55px;height:1px;background:#ffffff;"></div>
<div style="left:1348px;top:1px;width:1px;height:19px;background:#ffffff;"></div>
<div style="left:1401px;top:1px;width:1px;height:19px;background:#a0a0a0;"></div>
<div style="left:1348px;top:19px;width:55px;height:1px;background:#a0a0a0;"></div>
<div style="left:1402px;top:1px;width:1px;height:20px;background:#696969;"></div>
<div style="left:1348px;top:20px;width:55px;height:1px;background:#696969;"></div>
<div style="left:1403px;top:1px;width:43px;height:1px;background:#ffffff;"></div>
<div style="left:1403px;top:1px;width:1px;height:19px;background:#ffffff;"></div>
<div style="left:1444px;top:1px;width:1px;height:19px;background:#a0a0a0;"></div>
<div style="left:1403px;top:19px;width:43px;height:1px;background:#a0a0a0;"></div>
<div style="left:1445px;top:1px;width:1px;height:20px;background:#696969;"></div>
<div style="left:1403px;top:20px;width:43px;height:1px;background:#696969;"></div>
<div style="left:1446px;top:1px;width:48px;height:1px;background:#ffffff;"></div>
<div style="left:1446px;top:1px;width:1px;height:19px;background:#ffffff;"></div>
<div style="left:1492px;top:1px;width:1px;height:19px;background:#a0a0a0;"></div>
<div style="left:1446px;top:19px;width:48px;height:1px;background:#a0a0a0;"></div>
<div style="left:1493px;top:1px;width:1px;height:20px;background:#696969;"></div>
<div style="left:1446px;top:20px;width:48px;height:1px;background:#696969;"></div>
<div style="left:1494px;top:1px;width:53px;height:1px;background:#ffffff;"></div>
<div style="left:1494px;top:1px;width:1px;height:19px;background:#ffffff;"></div>
<div style="left:1545px;top:1px;width:1px;height:19px;background:#a0a0a0;"></div>
<div style="left:1494px;top:19px;width:53px;height:1px;background:#a0a0a0;"></div>
<div style="left:1546px;top:1px;width:1px;height:20px;background:#696969;"></div>
<div style="left:1494px;top:20px;width:53px;height:1px;background:#696969;"></div>
<div style="left:1547px;top:1px;width:54px;height:1px;background:#ffffff;"></div>
<div style="left:1547px;top:1px;width:1px;height:19px;background:#ffffff;"></div>
<div style="left:1599px;top:1px;width:1px;height:19px;background:#a0a0a0;"></div>
<div style="left:1547px;top:19px;width:54px;height:1px;background:#a0a0a0;"></div>
<div style="left:1600px;top:1px;width:1px;height:20px;background:#696969;"></div>
<div style="left:1547px;top:20px;width:54px;height:1px;background:#696969;"></div>
<div class="t" style="left:15px;top:5px;">Row #</div>
<div class="t" style="left:57px;top:5px;letter-spacing:-0.7px;">JZDH00</div>
<div class="t" style="left:109px;top:5px;letter-spacing:-0.7px;">YBDJH0</div>
<div class="t" style="left:245px;top:5px;letter-spacing:-0.7px;">MZID00</div>
<div class="t" style="left:297px;top:5px;letter-spacing:-0.7px;">BRID00</div>
<div class="t" style="left:349px;top:5px;letter-spacing:-0.7px;">BRZJE0</div>
<div class="t" style="left:409px;top:5px;letter-spacing:-0.7px;">JZJE00</div>
<div class="t" style="left:453px;top:5px;letter-spacing:-0.7px;">GFJE00</div>
<div class="t" style="left:499px;top:5px;letter-spacing:-0.7px;">HJJE00</div>
<div class="t" style="left:559px;top:5px;letter-spacing:-0.7px;">JMJE00</div>
<div class="t" style="left:604px;top:5px;letter-spacing:-0.7px;">GRZHZF</div>
<div class="t" style="left:654px;top:5px;letter-spacing:-0.7px;">TCJJZF</div>
<div class="t" style="left:714px;top:5px;letter-spacing:-0.7px;">ZFJE00</div>
<div class="t" style="left:768px;top:5px;letter-spacing:-0.7px;">PJH000</div>
<div class="t" style="left:826px;top:5px;letter-spacing:-0.7px;">JZRQ00</div>
<div class="t" style="left:884px;top:5px;letter-spacing:-0.7px;">JZSJ00</div>
<div class="t" style="left:938px;top:5px;letter-spacing:-0.7px;">XJFKJE</div>
<div class="t" style="left:992px;top:5px;letter-spacing:-0.7px;">ZZFKJE</div>
<div class="t" style="left:1052px;top:5px;letter-spacing:-0.7px;">JZY000</div>
<div class="t" style="left:1097px;top:5px;letter-spacing:-0.7px;">JMYY00</div>
<div class="t" style="left:1144px;top:5px;letter-spacing:-0.7px;">YBJZRQ</div>
<div class="t" style="left:1202px;top:5px;letter-spacing:-0.7px;">YBJZSJ</div>
<div class="t" style="left:1256px;top:5px;letter-spacing:-0.7px;">SBGRZH</div>
<div class="t" style="left:1305px;top:5px;letter-spacing:-0.7px;">SBTCJJ</div>
<div class="t" style="left:1350px;top:5px;letter-spacing:-0.7px;">YBXJZF</div>
<div class="t" style="left:1405px;top:5px;letter-spacing:-0.7px;">YLZFJE</div>
<div class="t" style="left:1448px;top:5px;letter-spacing:-0.7px;">CFDXJE</div>
<div class="t" style="left:1496px;top:5px;letter-spacing:-0.7px;">GWYBZ0</div>
<div class="t" style="left:1549px;top:5px;letter-spacing:-0.7px;">BCK</div>
<div style="left:1px;top:21px;width:11px;height:17px;background:#f0f0f0;"></div>
<div style="left:1px;top:21px;width:11px;height:1px;background:#ffffff;"></div>
<div style="left:1px;top:21px;width:1px;height:16px;background:#ffffff;"></div>
<div style="left:11px;top:21px;width:1px;height:16px;background:#a0a0a0;"></div>
<div style="left:1px;top:36px;width:11px;height:1px;background:#a0a0a0;"></div>
<div style="left:12px;top:21px;width:1px;height:17px;background:#696969;"></div>
<div style="left:1px;top:37px;width:12px;height:1px;background:#696969;"></div>
<div style="left:13px;top:37px;width:1553px;height:1px;background:#f0f0f0;"></div>
<div style="left:1px;top:38px;width:11px;height:17px;background:#f0f0f0;"></div>
<div style="left:1px;top:38px;width:11px;height:1px;background:#ffffff;"></div>
<div style="left:1px;top:38px;width:1px;height:16px;background:#ffffff;"></div>
<div style="left:11px;top:38px;width:1px;height:16px;background:#a0a0a0;"></div>
<div style="left:1px;top:53px;width:11px;height:1px;background:#a0a0a0;"></div>
<div style="left:12px;top:38px;width:1px;height:17px;background:#696969;"></div>
<div style="left:1px;top:54px;width:12px;height:1px;background:#696969;"></div>
<div style="left:13px;top:54px;width:1553px;height:1px;background:#f0f0f0;"></div>
<div style="left:1px;top:55px;width:11px;height:17px;background:#f0f0f0;"></div>
<div style="left:1px;top:55px;width:11px;height:1px;background:#ffffff;"></div>
<div style="left:1px;top:55px;width:1px;height:16px;background:#ffffff;"></div>
<div style="left:11px;top:55px;width:1px;height:16px;background:#a0a0a0;"></div>
<div style="left:1px;top:70px;width:11px;height:1px;background:#a0a0a0;"></div>
<div style="left:12px;top:55px;width:1px;height:17px;background:#696969;"></div>
<div style="left:1px;top:71px;width:12px;height:1px;background:#696969;"></div>
<div style="left:13px;top:71px;width:1553px;height:1px;background:#f0f0f0;"></div>
<div style="left:1px;top:72px;width:11px;height:17px;background:#f0f0f0;"></div>
<div style="left:1px;top:72px;width:11px;height:1px;background:#ffffff;"></div>
<div style="left:1px;top:72px;width:1px;height:16px;background:#ffffff;"></div>
<div style="left:11px;top:72px;width:1px;height:16px;background:#a0a0a0;"></div>
<div style="left:1px;top:87px;width:11px;height:1px;background:#a0a0a0;"></div>
<div style="left:12px;top:72px;width:1px;height:17px;background:#696969;"></div>
<div style="left:1px;top:88px;width:12px;height:1px;background:#696969;"></div>
<div style="left:13px;top:88px;width:1553px;height:1px;background:#f0f0f0;"></div>
<div style="left:1px;top:89px;width:11px;height:17px;background:#f0f0f0;"></div>
<div style="left:1px;top:89px;width:11px;height:1px;background:#ffffff;"></div>
<div style="left:1px;top:89px;width:1px;height:16px;background:#ffffff;"></div>
<div style="left:11px;top:89px;width:1px;height:16px;background:#a0a0a0;"></div>
<div style="left:1px;top:104px;width:11px;height:1px;background:#a0a0a0;"></div>
<div style="left:12px;top:89px;width:1px;height:17px;background:#696969;"></div>
<div style="left:1px;top:105px;width:12px;height:1px;background:#696969;"></div>
<div style="left:13px;top:105px;width:1553px;height:1px;background:#f0f0f0;"></div>
<div style="left:1px;top:106px;width:11px;height:17px;background:#f0f0f0;"></div>
<div style="left:1px;top:106px;width:11px;height:1px;background:#ffffff;"></div>
<div style="left:1px;top:106px;width:1px;height:16px;background:#ffffff;"></div>
<div style="left:11px;top:106px;width:1px;height:16px;background:#a0a0a0;"></div>
<div style="left:1px;top:121px;width:11px;height:1px;background:#a0a0a0;"></div>
<div style="left:12px;top:106px;width:1px;height:17px;background:#696969;"></div>
<div style="left:1px;top:122px;width:12px;height:1px;background:#696969;"></div>
<div style="left:13px;top:122px;width:1553px;height:1px;background:#f0f0f0;"></div>
<div style="left:1px;top:123px;width:11px;height:17px;background:#f0f0f0;"></div>
<div style="left:1px;top:123px;width:11px;height:1px;background:#ffffff;"></div>
<div style="left:1px;top:123px;width:1px;height:16px;background:#ffffff;"></div>
<div style="left:11px;top:123px;width:1px;height:16px;background:#a0a0a0;"></div>
<div style="left:1px;top:138px;width:11px;height:1px;background:#a0a0a0;"></div>
<div style="left:12px;top:123px;width:1px;height:17px;background:#696969;"></div>
<div style="left:1px;top:139px;width:12px;height:1px;background:#696969;"></div>
<div style="left:13px;top:139px;width:1553px;height:1px;background:#f0f0f0;"></div>
<div style="left:1px;top:140px;width:11px;height:17px;background:#f0f0f0;"></div>
<div style="left:1px;top:140px;width:11px;height:1px;background:#ffffff;"></div>
<div style="left:1px;top:140px;width:1px;height:16px;background:#ffffff;"></div>
<div style="left:11px;top:140px;width:1px;height:16px;background:#a0a0a0;"></div>
<div style="left:1px;top:155px;width:11px;height:1px;background:#a0a0a0;"></div>
<div style="left:12px;top:140px;width:1px;height:17px;background:#696969;"></div>
<div style="left:1px;top:156px;width:12px;height:1px;background:#696969;"></div>
<div style="left:13px;top:156px;width:1553px;height:1px;background:#f0f0f0;"></div>
<div style="left:1px;top:157px;width:11px;height:17px;background:#f0f0f0;"></div>
<div style="left:1px;top:157px;width:11px;height:1px;background:#ffffff;"></div>
<div style="left:1px;top:157px;width:1px;height:16px;background:#ffffff;"></div>
<div style="left:11px;top:157px;width:1px;height:16px;background:#a0a0a0;"></div>
<div style="left:1px;top:172px;width:11px;height:1px;background:#a0a0a0;"></div>
<div style="left:12px;top:157px;width:1px;height:17px;background:#696969;"></div>
<div style="left:1px;top:173px;width:12px;height:1px;background:#696969;"></div>
<div style="left:13px;top:173px;width:1553px;height:1px;background:#f0f0f0;"></div>
<div style="left:1px;top:174px;width:11px;height:17px;background:#f0f0f0;"></div>
<div style="left:1px;top:174px;width:11px;height:1px;background:#ffffff;"></div>
<div style="left:1px;top:174px;width:1px;height:16px;background:#ffffff;"></div>
<div style="left:11px;top:174px;width:1px;height:16px;background:#a0a0a0;"></div>
<div style="left:1px;top:189px;width:11px;height:1px;background:#a0a0a0;"></div>
<div style="left:12px;top:174px;width:1px;height:17px;background:#696969;"></div>
<div style="left:1px;top:190px;width:12px;height:1px;background:#696969;"></div>
<div style="left:13px;top:190px;width:1553px;height:1px;background:#f0f0f0;"></div>
<div style="left:1px;top:191px;width:11px;height:17px;background:#f0f0f0;"></div>
<div style="left:1px;top:191px;width:11px;height:1px;background:#ffffff;"></div>
<div style="left:1px;top:191px;width:1px;height:16px;background:#ffffff;"></div>
<div style="left:11px;top:191px;width:1px;height:16px;background:#a0a0a0;"></div>
<div style="left:1px;top:206px;width:11px;height:1px;background:#a0a0a0;"></div>
<div style="left:12px;top:191px;width:1px;height:17px;background:#696969;"></div>
<div style="left:1px;top:207px;width:12px;height:1px;background:#696969;"></div>
<div style="left:13px;top:207px;width:1553px;height:1px;background:#f0f0f0;"></div>
<div style="left:54px;top:21px;width:1px;height:187px;background:#f0f0f0;"></div>
<div style="left:106px;top:21px;width:1px;height:187px;background:#f0f0f0;"></div>
<div style="left:242px;top:21px;width:1px;height:187px;background:#f0f0f0;"></div>
<div style="left:294px;top:21px;width:1px;height:187px;background:#f0f0f0;"></div>
<div style="left:346px;top:21px;width:1px;height:187px;background:#f0f0f0;"></div>
<div style="left:406px;top:21px;width:1px;height:187px;background:#f0f0f0;"></div>
<div style="left:450px;top:21px;width:1px;height:187px;background:#f0f0f0;"></div>
<div style="left:496px;top:21px;width:1px;height:187px;background:#f0f0f0;"></div>
<div style="left:556px;top:21px;width:1px;height:187px;background:#f0f0f0;"></div>
<div style="left:601px;top:21px;width:1px;height:187px;background:#f0f0f0;"></div>
<div style="left:651px;top:21px;width:1px;height:187px;background:#f0f0f0;"></div>
<div style="left:711px;top:21px;width:1px;height:187px;background:#f0f0f0;"></div>
<div style="left:765px;top:21px;width:1px;height:187px;background:#f0f0f0;"></div>
<div style="left:823px;top:21px;width:1px;height:187px;background:#f0f0f0;"></div>
<div style="left:881px;top:21px;width:1px;height:187px;background:#f0f0f0;"></div>
<div style="left:935px;top:21px;width:1px;height:187px;background:#f0f0f0;"></div>
<div style="left:989px;top:21px;width:1px;height:187px;background:#f0f0f0;"></div>
<div style="left:1049px;top:21px;width:1px;height:187px;background:#f0f0f0;"></div>
<div style="left:1094px;top:21px;width:1px;height:187px;background:#f0f0f0;"></div>
<div style="left:1141px;top:21px;width:1px;height:187px;background:#f0f0f0;"></div>
<div style="left:1199px;top:21px;width:1px;height:187px;background:#f0f0f0;"></div>
<div style="left:1253px;top:21px;width:1px;height:187px;background:#f0f0f0;"></div>
<div style="left:1302px;top:21px;width:1px;height:187px;background:#f0f0f0;"></div>
<div style="left:1347px;top:21px;width:1px;height:187px;background:#f0f0f0;"></div>
<div style="left:1402px;top:21px;width:1px;height:187px;background:#f0f0f0;"></div>
<div style="left:1445px;top:21px;width:1px;height:187px;background:#f0f0f0;"></div>
<div style="left:1493px;top:21px;width:1px;height:187px;background:#f0f0f0;"></div>
<div style="left:1546px;top:21px;width:1px;height:187px;background:#f0f0f0;"></div>
<div style="left:1600px;top:21px;width:1px;height:187px;background:#f0f0f0;"></div>
<svg style="left:4px;top:92px" width="5" height="9" shape-rendering="crispEdges"><rect x="0" y="0" width="1" height="9" fill="#000"/><rect x="1" y="1" width="1" height="7" fill="#000"/><rect x="2" y="2" width="1" height="5" fill="#000"/><rect x="3" y="3" width="1" height="3" fill="#000"/><rect x="4" y="4" width="1" height="1" fill="#000"/></svg>
<div class="t r" style="left:13px;top:23px;width:38.5px">1</div>
<div class="t r" style="left:55px;top:23px;width:48.5px">5701003</div>
<div class="t" style="left:109px;top:23px">000316841715</div>
<div class="t r" style="left:243px;top:23px;width:48.5px">7774171</div>
<div class="t r" style="left:295px;top:23px;width:48.5px">1538095</div>
<div class="t r" style="left:347px;top:23px;width:56.5px">58.06</div>
<div class="t r" style="left:407px;top:23px;width:40.5px">0</div>
<div class="t r" style="left:451px;top:23px;width:42.5px">0</div>
<div class="t r" style="left:497px;top:23px;width:56.5px">58.06</div>
<div class="t r" style="left:557px;top:23px;width:41.5px">0</div>
<div class="t r" style="left:602px;top:23px;width:46.5px">0</div>
<div class="t r" style="left:652px;top:23px;width:56.5px">42.81</div>
<div class="t r" style="left:712px;top:23px;width:50.5px">15.25</div>
<div class="t r" style="left:766px;top:23px;width:54.5px">10847697</div>
<div class="t" style="left:826px;top:23px">20200608</div>
<div class="t" style="left:884px;top:23px">17:38:33</div>
<div class="t r" style="left:936px;top:23px;width:50.5px">-42.81</div>
<div class="t r" style="left:990px;top:23px;width:56.5px">58.06</div>
<div class="t r" style="left:1050px;top:23px;width:41.5px">1268</div>
<div class="t" style="left:1144px;top:23px">20200608</div>
<div class="t" style="left:1202px;top:23px">17:38:33</div>
<div class="t r" style="left:1254px;top:23px;width:45.5px">0</div>
<div class="t r" style="left:1303px;top:23px;width:41.5px">0</div>
<div class="t r" style="left:1348px;top:23px;width:51.5px">0</div>
<div class="t r" style="left:1403px;top:23px;width:39.5px">0</div>
<div class="t r" style="left:1446px;top:23px;width:44.5px">0</div>
<div class="t r" style="left:1494px;top:23px;width:49.5px">2.14</div>
<div class="t r" style="left:13px;top:40px;width:38.5px">2</div>
<div class="t r" style="left:55px;top:40px;width:48.5px">5700963</div>
<div class="t" style="left:109px;top:40px">000316841627</div>
<div class="t r" style="left:243px;top:40px;width:48.5px">7773971</div>
<div class="t r" style="left:295px;top:40px;width:48.5px">1538095</div>
<div class="t r" style="left:347px;top:40px;width:56.5px">-126.69</div>
<div class="t r" style="left:407px;top:40px;width:40.5px">0</div>
<div class="t r" style="left:451px;top:40px;width:42.5px">0</div>
<div class="t r" style="left:497px;top:40px;width:56.5px">-126.69</div>
<div class="t r" style="left:557px;top:40px;width:41.5px">0</div>
<div class="t r" style="left:602px;top:40px;width:46.5px">0</div>
<div class="t r" style="left:652px;top:40px;width:56.5px">-76.67</div>
<div class="t r" style="left:712px;top:40px;width:50.5px">-50.02</div>
<div class="t r" style="left:766px;top:40px;width:54.5px">10847247</div>
<div class="t" style="left:826px;top:40px">20200605</div>
<div class="t" style="left:884px;top:40px">16:18:56</div>
<div class="t r" style="left:936px;top:40px;width:50.5px">-50.02</div>
<div class="t r" style="left:990px;top:40px;width:56.5px">0</div>
<div class="t r" style="left:1050px;top:40px;width:41.5px">671</div>
<div class="t r" style="left:1254px;top:40px;width:45.5px">0</div>
<div class="t r" style="left:1303px;top:40px;width:41.5px">0</div>
<div class="t r" style="left:1348px;top:40px;width:51.5px">-50.02</div>
<div class="t r" style="left:1403px;top:40px;width:39.5px">0</div>
<div class="t r" style="left:1446px;top:40px;width:44.5px">0</div>
<div class="t r" style="left:1494px;top:40px;width:49.5px">-4.07</div>
<div class="t r" style="left:13px;top:57px;width:38.5px">3</div>
<div class="t r" style="left:55px;top:57px;width:48.5px">5700953</div>
<div class="t" style="left:109px;top:57px">000316841626</div>
<div class="t r" style="left:243px;top:57px;width:48.5px">7773971</div>
<div class="t r" style="left:295px;top:57px;width:48.5px">1538095</div>
<div class="t r" style="left:347px;top:57px;width:56.5px">126.69</div>
<div class="t r" style="left:407px;top:57px;width:40.5px">0</div>
<div class="t r" style="left:451px;top:57px;width:42.5px">0</div>
<div class="t r" style="left:497px;top:57px;width:56.5px">126.69</div>
<div class="t r" style="left:557px;top:57px;width:41.5px">0</div>
<div class="t r" style="left:602px;top:57px;width:46.5px">0</div>
<div class="t r" style="left:652px;top:57px;width:56.5px">76.67</div>
<div class="t r" style="left:712px;top:57px;width:50.5px">50.02</div>
<div class="t r" style="left:766px;top:57px;width:54.5px">10847197</div>
<div class="t" style="left:826px;top:57px">20200605</div>
<div class="t" style="left:884px;top:57px">16:17:37</div>
<div class="t r" style="left:936px;top:57px;width:50.5px">50.02</div>
<div class="t r" style="left:990px;top:57px;width:56.5px">0</div>
<div class="t r" style="left:1050px;top:57px;width:41.5px">671</div>
<div class="t" style="left:1144px;top:57px">20200605</div>
<div class="t" style="left:1202px;top:57px">16:20:00</div>
<div class="t r" style="left:1254px;top:57px;width:45.5px">0</div>
<div class="t r" style="left:1303px;top:57px;width:41.5px">0</div>
<div class="t r" style="left:1348px;top:57px;width:51.5px">50.02</div>
<div class="t r" style="left:1403px;top:57px;width:39.5px">0</div>
<div class="t r" style="left:1446px;top:57px;width:44.5px">0</div>
<div class="t r" style="left:1494px;top:57px;width:49.5px">4.07</div>
<div class="t r" style="left:13px;top:74px;width:38.5px">4</div>
<div class="t r" style="left:55px;top:74px;width:48.5px">5700943</div>
<div class="t" style="left:109px;top:74px">000316841625</div>
<div class="t r" style="left:243px;top:74px;width:48.5px">7773971</div>
<div class="t r" style="left:295px;top:74px;width:48.5px">1538095</div>
<div class="t r" style="left:347px;top:74px;width:56.5px">-10</div>
<div class="t r" style="left:407px;top:74px;width:40.5px">0</div>
<div class="t r" style="left:451px;top:74px;width:42.5px">0</div>
<div class="t r" style="left:497px;top:74px;width:56.5px">-10</div>
<div class="t r" style="left:557px;top:74px;width:41.5px">0</div>
<div class="t r" style="left:602px;top:74px;width:46.5px">0</div>
<div class="t r" style="left:652px;top:74px;width:56.5px">-8.94</div>
<div class="t r" style="left:712px;top:74px;width:50.5px">-1.06</div>
<div class="t r" style="left:766px;top:74px;width:54.5px">10847147</div>
<div class="t" style="left:826px;top:74px">20200605</div>
<div class="t" style="left:884px;top:74px">16:16:40</div>
<div class="t r" style="left:936px;top:74px;width:50.5px">-1.06</div>
<div class="t r" style="left:990px;top:74px;width:56.5px">0</div>
<div class="t r" style="left:1050px;top:74px;width:41.5px">671</div>
<div class="t r" style="left:1254px;top:74px;width:45.5px">0</div>
<div class="t r" style="left:1303px;top:74px;width:41.5px">0</div>
<div class="t r" style="left:1348px;top:74px;width:51.5px">-1.06</div>
<div class="t r" style="left:1403px;top:74px;width:39.5px">0</div>
<div class="t r" style="left:1446px;top:74px;width:44.5px">0</div>
<div class="t r" style="left:1494px;top:74px;width:49.5px">-0.22</div>
<div class="t r" style="left:13px;top:91px;width:38.5px">5</div>
<div class="t r" style="left:55px;top:91px;width:48.5px">5700933</div>
<div class="t" style="left:109px;top:91px">000316841624</div>
<div class="t r" style="left:243px;top:91px;width:48.5px">7773971</div>
<div class="t r" style="left:295px;top:91px;width:48.5px">1538095</div>
<div class="t r" style="left:347px;top:91px;width:56.5px">10</div>
<div class="t r" style="left:407px;top:91px;width:40.5px">0</div>
<div class="t r" style="left:451px;top:91px;width:42.5px">0</div>
<div class="t r" style="left:497px;top:91px;width:56.5px">10</div>
<div class="t r" style="left:557px;top:91px;width:41.5px">0</div>
<div class="t r" style="left:602px;top:91px;width:46.5px">0</div>
<div class="t r" style="left:652px;top:91px;width:56.5px">8.94</div>
<div class="t r" style="left:712px;top:91px;width:50.5px">1.06</div>
<div style="left:768px;top:92px;width:48px;height:13px;background:#3399ff;"></div>
<div class="t" style="left:769px;top:91px;color:#fff;letter-spacing:-0.2px">10847097</div>
<div class="t" style="left:826px;top:91px">20200605</div>
<div class="t" style="left:884px;top:91px">16:14:34</div>
<div class="t r" style="left:936px;top:91px;width:50.5px">1.06</div>
<div class="t r" style="left:990px;top:91px;width:56.5px">0</div>
<div class="t r" style="left:1050px;top:91px;width:41.5px">671</div>
<div class="t" style="left:1144px;top:91px">20200605</div>
<div class="t" style="left:1202px;top:91px">16:17:00</div>
<div class="t r" style="left:1254px;top:91px;width:45.5px">0</div>
<div class="t r" style="left:1303px;top:91px;width:41.5px">0</div>
<div class="t r" style="left:1348px;top:91px;width:51.5px">1.06</div>
<div class="t r" style="left:1403px;top:91px;width:39.5px">0</div>
<div class="t r" style="left:1446px;top:91px;width:44.5px">0</div>
<div class="t r" style="left:1494px;top:91px;width:49.5px">0.22</div>
<div class="t r" style="left:13px;top:108px;width:38.5px">6</div>
<div class="t r" style="left:55px;top:108px;width:48.5px">5700883</div>
<div class="t" style="left:109px;top:108px">0</div>
<div class="t r" style="left:243px;top:108px;width:48.5px">7771369</div>
<div class="t r" style="left:295px;top:108px;width:48.5px">1538395</div>
<div class="t r" style="left:347px;top:108px;width:56.5px">119.2</div>
<div class="t r" style="left:407px;top:108px;width:40.5px">0</div>
<div class="t r" style="left:451px;top:108px;width:42.5px">0</div>
<div class="t r" style="left:497px;top:108px;width:56.5px">119.2</div>
<div class="t r" style="left:557px;top:108px;width:41.5px">0</div>
<div class="t r" style="left:602px;top:108px;width:46.5px">0</div>
<div class="t r" style="left:652px;top:108px;width:56.5px">0</div>
<div class="t r" style="left:712px;top:108px;width:50.5px">119.2</div>
<div class="t r" style="left:766px;top:108px;width:54.5px">10846699</div>
<div class="t" style="left:826px;top:108px">20200531</div>
<div class="t" style="left:884px;top:108px">22:50:43</div>
<div class="t r" style="left:936px;top:108px;width:50.5px">119.2</div>
<div class="t r" style="left:990px;top:108px;width:56.5px">0</div>
<div class="t r" style="left:1050px;top:108px;width:41.5px">671</div>
<div class="t r" style="left:1254px;top:108px;width:45.5px">0</div>
<div class="t r" style="left:1303px;top:108px;width:41.5px">0</div>
<div class="t r" style="left:1348px;top:108px;width:51.5px">0</div>
<div class="t r" style="left:1403px;top:108px;width:39.5px">0</div>
<div class="t r" style="left:1446px;top:108px;width:44.5px">0</div>
<div class="t r" style="left:1494px;top:108px;width:49.5px">0</div>
<div class="t r" style="left:13px;top:125px;width:38.5px">7</div>
<div class="t r" style="left:55px;top:125px;width:48.5px">5700873</div>
<div class="t" style="left:109px;top:125px">0</div>
<div class="t r" style="left:243px;top:125px;width:48.5px">7773721</div>
<div class="t r" style="left:295px;top:125px;width:48.5px">1538095</div>
<div class="t r" style="left:347px;top:125px;width:56.5px">10.07</div>
<div class="t r" style="left:407px;top:125px;width:40.5px">0</div>
<div class="t r" style="left:451px;top:125px;width:42.5px">0</div>
<div class="t r" style="left:497px;top:125px;width:56.5px">10.07</div>
<div class="t r" style="left:557px;top:125px;width:41.5px">0</div>
<div class="t r" style="left:602px;top:125px;width:46.5px">0</div>
<div class="t r" style="left:652px;top:125px;width:56.5px">0</div>
<div class="t r" style="left:712px;top:125px;width:50.5px">10.07</div>
<div class="t r" style="left:766px;top:125px;width:54.5px">10846597</div>
<div class="t" style="left:826px;top:125px">20200508</div>
<div class="t" style="left:884px;top:125px">08:52:34</div>
<div class="t r" style="left:936px;top:125px;width:50.5px">0</div>
<div class="t r" style="left:990px;top:125px;width:56.5px">10.07</div>
<div class="t r" style="left:1050px;top:125px;width:41.5px">671</div>
<div class="t r" style="left:1254px;top:125px;width:45.5px">0</div>
<div class="t r" style="left:1303px;top:125px;width:41.5px">0</div>
<div class="t r" style="left:1348px;top:125px;width:51.5px">0</div>
<div class="t r" style="left:1403px;top:125px;width:39.5px">0</div>
<div class="t r" style="left:1446px;top:125px;width:44.5px">0</div>
<div class="t r" style="left:1494px;top:125px;width:49.5px">0</div>
<div class="t r" style="left:13px;top:142px;width:38.5px">8</div>
<div class="t r" style="left:55px;top:142px;width:48.5px">5700864</div>
<div class="t" style="left:109px;top:142px">000316840770</div>
<div class="t r" style="left:243px;top:142px;width:48.5px">7773521</div>
<div class="t r" style="left:295px;top:142px;width:48.5px">1538095</div>
<div class="t r" style="left:347px;top:142px;width:56.5px">270.69</div>
<div class="t r" style="left:407px;top:142px;width:40.5px">0</div>
<div class="t r" style="left:451px;top:142px;width:42.5px">0</div>
<div class="t r" style="left:497px;top:142px;width:56.5px">270.69</div>
<div class="t r" style="left:557px;top:142px;width:41.5px">0</div>
<div class="t r" style="left:602px;top:142px;width:46.5px">0</div>
<div class="t r" style="left:652px;top:142px;width:56.5px">262.43</div>
<div class="t r" style="left:712px;top:142px;width:50.5px">8.26</div>
<div class="t r" style="left:766px;top:142px;width:54.5px">10845998</div>
<div class="t" style="left:826px;top:142px">20200506</div>
<div class="t" style="left:884px;top:142px">12:46:45</div>
<div class="t r" style="left:936px;top:142px;width:50.5px">8.26</div>
<div class="t r" style="left:990px;top:142px;width:56.5px">0</div>
<div class="t r" style="left:1050px;top:142px;width:41.5px">671</div>
<div class="t" style="left:1144px;top:142px">20200506</div>
<div class="t" style="left:1202px;top:142px">12:49:00</div>
<div class="t r" style="left:1254px;top:142px;width:45.5px">0</div>
<div class="t r" style="left:1303px;top:142px;width:41.5px">0</div>
<div class="t r" style="left:1348px;top:142px;width:51.5px">8.26</div>
<div class="t r" style="left:1403px;top:142px;width:39.5px">0</div>
<div class="t r" style="left:1446px;top:142px;width:44.5px">0</div>
<div class="t r" style="left:1494px;top:142px;width:49.5px">29.06</div>
<div class="t r" style="left:13px;top:159px;width:38.5px">9</div>
<div class="t r" style="left:55px;top:159px;width:48.5px">5700853</div>
<div class="t" style="left:109px;top:159px">0</div>
<div class="t r" style="left:243px;top:159px;width:48.5px">7773021</div>
<div class="t r" style="left:295px;top:159px;width:48.5px">1538095</div>
<div class="t r" style="left:347px;top:159px;width:56.5px">19751.86</div>
<div class="t r" style="left:407px;top:159px;width:40.5px">0</div>
<div class="t r" style="left:451px;top:159px;width:42.5px">0</div>
<div class="t r" style="left:497px;top:159px;width:56.5px">19751.86</div>
<div class="t r" style="left:557px;top:159px;width:41.5px">0</div>
<div class="t r" style="left:602px;top:159px;width:46.5px">0</div>
<div class="t r" style="left:652px;top:159px;width:56.5px">0</div>
<div class="t r" style="left:712px;top:159px;width:50.5px">19751.86</div>
<div class="t r" style="left:766px;top:159px;width:54.5px">10845648</div>
<div class="t" style="left:826px;top:159px">20200425</div>
<div class="t" style="left:884px;top:159px">14:23:16</div>
<div class="t r" style="left:936px;top:159px;width:50.5px">19751.86</div>
<div class="t r" style="left:990px;top:159px;width:56.5px">0</div>
<div class="t r" style="left:1050px;top:159px;width:41.5px">671</div>
<div class="t r" style="left:1254px;top:159px;width:45.5px">0</div>
<div class="t r" style="left:1303px;top:159px;width:41.5px">0</div>
<div class="t r" style="left:1348px;top:159px;width:51.5px">0</div>
<div class="t r" style="left:1403px;top:159px;width:39.5px">0</div>
<div class="t r" style="left:1446px;top:159px;width:44.5px">0</div>
<div class="t r" style="left:1494px;top:159px;width:49.5px">0</div>
<div class="t r" style="left:13px;top:176px;width:38.5px">10</div>
<div class="t r" style="left:55px;top:176px;width:48.5px">5700843</div>
<div class="t" style="left:109px;top:176px">0</div>
<div class="t r" style="left:243px;top:176px;width:48.5px">7773271</div>
<div class="t r" style="left:295px;top:176px;width:48.5px">853818</div>
<div class="t r" style="left:347px;top:176px;width:56.5px">0.46</div>
<div class="t r" style="left:407px;top:176px;width:40.5px">0</div>
<div class="t r" style="left:451px;top:176px;width:42.5px">0</div>
<div class="t r" style="left:497px;top:176px;width:56.5px">0.46</div>
<div class="t r" style="left:557px;top:176px;width:41.5px">0</div>
<div class="t r" style="left:602px;top:176px;width:46.5px">0</div>
<div class="t r" style="left:652px;top:176px;width:56.5px">0</div>
<div class="t r" style="left:712px;top:176px;width:50.5px">0.46</div>
<div class="t r" style="left:766px;top:176px;width:54.5px">10845547</div>
<div class="t" style="left:826px;top:176px">20200424</div>
<div class="t" style="left:884px;top:176px">09:57:44</div>
<div class="t r" style="left:936px;top:176px;width:50.5px">0.46</div>
<div class="t r" style="left:990px;top:176px;width:56.5px">0</div>
<div class="t r" style="left:1050px;top:176px;width:41.5px">671</div>
<div class="t r" style="left:1254px;top:176px;width:45.5px">0</div>
<div class="t r" style="left:1303px;top:176px;width:41.5px">0</div>
<div class="t r" style="left:1348px;top:176px;width:51.5px">0</div>
<div class="t r" style="left:1403px;top:176px;width:39.5px">0</div>
<div class="t r" style="left:1446px;top:176px;width:44.5px">0</div>
<div class="t r" style="left:1494px;top:176px;width:49.5px">0</div>
<div class="t r" style="left:13px;top:193px;width:38.5px">11</div>
<div class="t r" style="left:55px;top:193px;width:48.5px">5700833</div>
<div class="t" style="left:109px;top:193px">0</div>
<div class="t r" style="left:243px;top:193px;width:48.5px">7773271</div>
<div class="t r" style="left:295px;top:193px;width:48.5px">853818</div>
<div class="t r" style="left:347px;top:193px;width:56.5px">10.93</div>
<div class="t r" style="left:407px;top:193px;width:40.5px">0</div>
<div class="t r" style="left:451px;top:193px;width:42.5px">0</div>
<div class="t r" style="left:497px;top:193px;width:56.5px">10.93</div>
<div class="t r" style="left:557px;top:193px;width:41.5px">0</div>
<div class="t r" style="left:602px;top:193px;width:46.5px">0</div>
<div class="t r" style="left:652px;top:193px;width:56.5px">0</div>
<div class="t r" style="left:712px;top:193px;width:50.5px">10.93</div>
<div class="t r" style="left:766px;top:193px;width:54.5px">10845497</div>
<div class="t" style="left:826px;top:193px">20200424</div>
<div class="t" style="left:884px;top:193px">09:51:17</div>
<div class="t r" style="left:936px;top:193px;width:50.5px">10.93</div>
<div class="t r" style="left:990px;top:193px;width:56.5px">0</div>
<div class="t r" style="left:1050px;top:193px;width:41.5px">671</div>
<div class="t r" style="left:1254px;top:193px;width:45.5px">0</div>
<div class="t r" style="left:1303px;top:193px;width:41.5px">0</div>
<div class="t r" style="left:1348px;top:193px;width:51.5px">0</div>
<div class="t r" style="left:1403px;top:193px;width:39.5px">0</div>
<div class="t r" style="left:1446px;top:193px;width:44.5px">0</div>
<div class="t r" style="left:1494px;top:193px;width:49.5px">0</div>
</div>
<div style="left:1566px;top:268px;width:18px;height:1px;background:#696969;"></div>
<div style="left:1566px;top:269px;width:17px;height:213px;background:#f0f0f0;"></div>
<div style="left:1566px;top:269px;width:1px;height:213px;background:#e6e6e6;"></div>
<svg style="left:1571px;top:276px" width="9" height="5"><polygon points="0,4 8,4 4,0" fill="#505050"/></svg>
<div class="thumbv" style="left:1567px;top:291px;width:15px;height:15px"></div>
<svg style="left:1571px;top:470px" width="9" height="5"><polygon points="0,0 8,0 4,4" fill="#505050"/></svg>
<div style="left:1px;top:482px;width:1565px;height:16px;background:#f0f0f0;"></div>
<div style="left:1px;top:482px;width:1565px;height:1px;background:#e8e8e8;"></div>
<div style="left:0px;top:268px;width:1px;height:230px;background:#696969;"></div>
<svg style="left:7px;top:486px" width="5" height="9"><polygon points="4,0 4,8 0,4" fill="#505050"/></svg>
<div class="thumbh" style="left:19px;top:482px;width:296px;height:15px"></div>
<svg style="left:163px;top:486px" width="8" height="7" shape-rendering="crispEdges"><defs><linearGradient id="gg" x1="0" y1="0" x2="0" y2="1"><stop offset="0" stop-color="#303030"/><stop offset="1" stop-color="#a0a0a0"/></linearGradient></defs><rect x="0" y="0" width="2" height="7" fill="url(#gg)"/><rect x="3" y="0" width="2" height="7" fill="url(#gg)"/><rect x="6" y="0" width="2" height="7" fill="url(#gg)"/></svg>
<svg style="left:1556px;top:485px" width="5" height="9"><polygon points="0,0 4,4 0,8" fill="#505050"/></svg>
<div style="left:1566px;top:482px;width:17px;height:16px;background:#f0f0f0;"></div>
<div style="left:1566px;top:481px;width:17px;height:1px;background:#e0e0e0;"></div>
<div style="left:0px;top:498px;width:1587px;height:5px;background:#ffffff;"></div>
<div style="left:0px;top:503px;width:1587px;height:1px;background:#8c8e96;"></div>
<div style="left:0px;top:504px;width:1587px;height:1px;background:#e8e8e8;"></div>
<div style="left:0px;top:505px;width:1587px;height:1px;background:#a0a0a0;"></div>
<div style="left:0px;top:506px;width:1587px;height:1px;background:#ffffff;"></div>
<div style="left:0px;top:507px;width:1590px;height:18px;background:#f0edeb;"></div>
<div style="left:132px;top:507px;width:1px;height:18px;background:#cfcfcf;"></div>
<div style="left:216px;top:507px;width:1px;height:18px;background:#cfcfcf;"></div>
<div style="left:320px;top:507px;width:1px;height:18px;background:#cfcfcf;"></div>
<div style="left:424px;top:507px;width:1px;height:18px;background:#cfcfcf;"></div>
<div style="left:528px;top:507px;width:1px;height:18px;background:#cfcfcf;"></div>
<div class="t" style="left:-5.5px;top:511px">Row 5 of 250 (partial)</div>
<div class="t" style="left:530px;top:511px">Updateable</div>
<div style="left:653px;top:287px;width:58px;height:21px;border:1px solid #ec3434"></div>
<div style="left:921px;top:247px;width:135px;height:60px;border:1px solid #ec3434"></div>
</body></html>
